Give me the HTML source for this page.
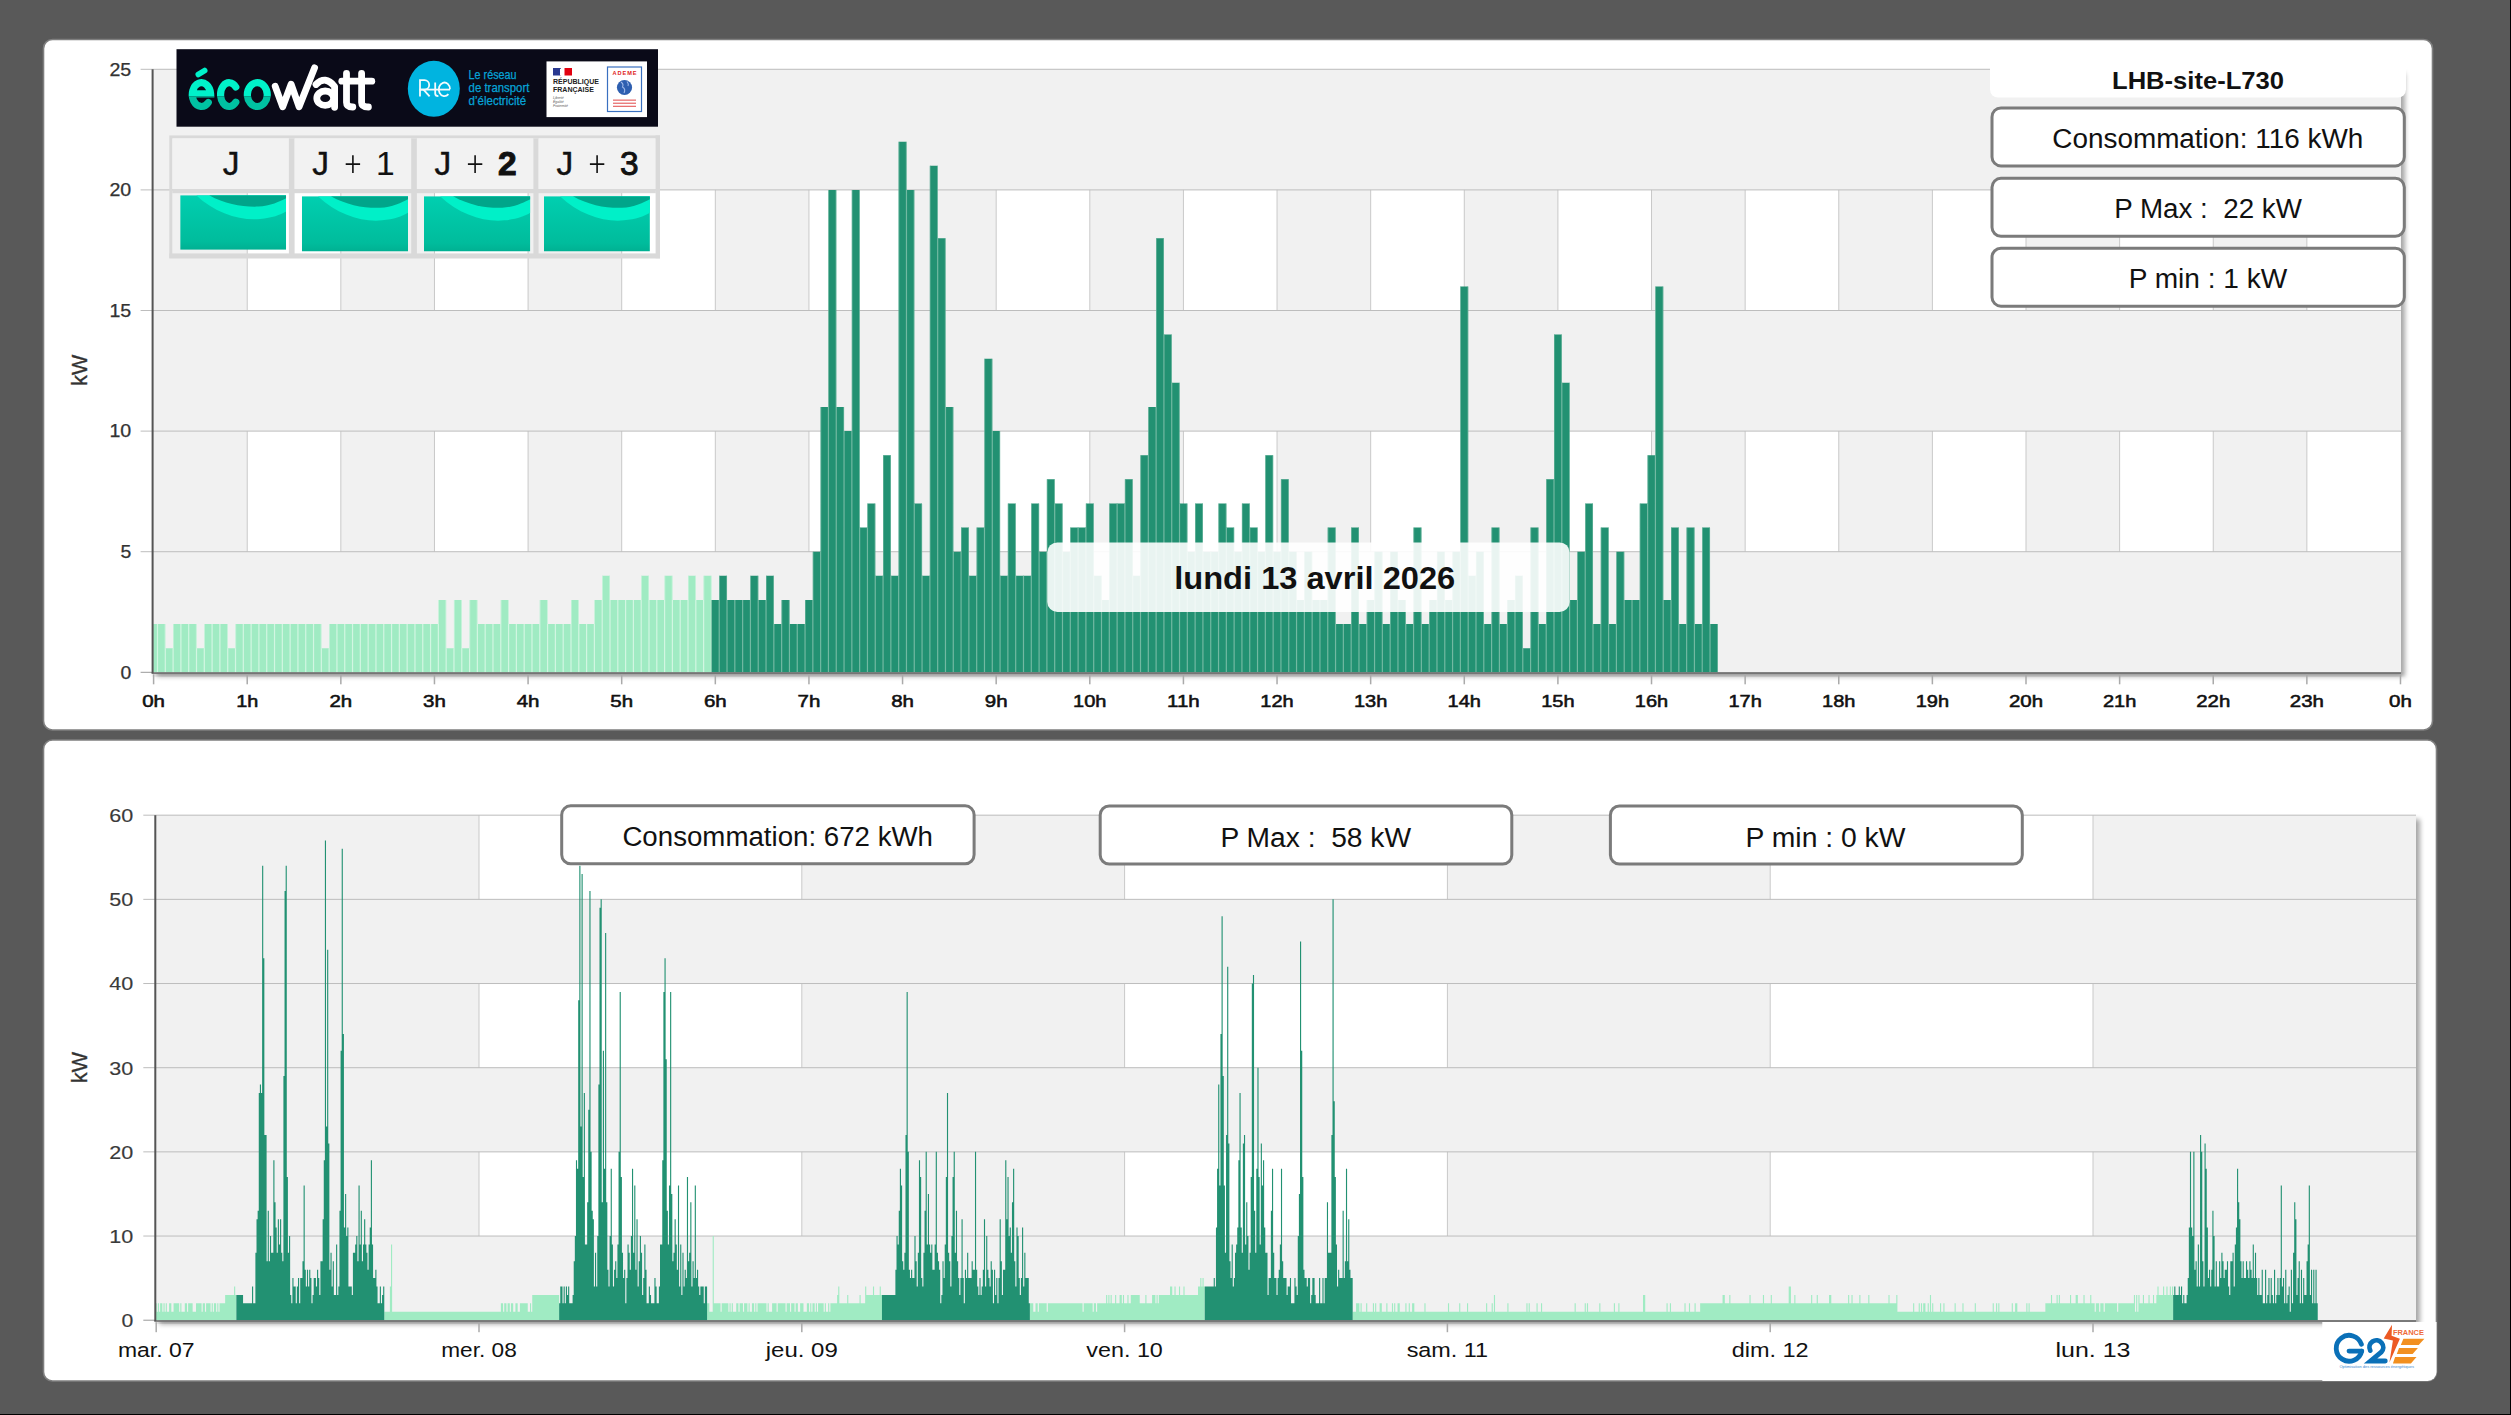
<!DOCTYPE html><html><head><meta charset="utf-8"><style>
html,body{margin:0;padding:0;background:#595959;overflow:hidden;}
svg{display:block;font-family:"Liberation Sans",sans-serif;}
</style></head><body>
<svg width="2511" height="1415" viewBox="0 0 2511 1415">
<defs><filter id="sh" x="-5%" y="-5%" width="110%" height="115%"><feGaussianBlur stdDeviation="2.5"/></filter><linearGradient id="tile" x1="0" y1="0" x2="0" y2="1"><stop offset="0" stop-color="#00cfb0"/><stop offset="0.85" stop-color="#00bc9c"/><stop offset="1" stop-color="#00b092"/></linearGradient></defs>
<rect x="0" y="0" width="2511" height="1415" fill="#595959"/>
<rect x="2510" y="0" width="1" height="1415" fill="#000"/>
<rect x="0" y="1414" width="2511" height="1" fill="#000"/>
<rect x="43.5" y="39.5" width="2389" height="690.5" rx="9" fill="#fff" stroke="#7f7f7f" stroke-width="1.6"/>
<rect x="43.5" y="740" width="2393" height="641" rx="9" fill="#fff" stroke="#7f7f7f" stroke-width="1.6"/>
<rect x="156.6" y="73.3" width="2248.4" height="603.0" fill="#000" opacity="0.35" filter="url(#sh)"/>
<rect x="152.6" y="69.3" width="2248.4" height="603.0" fill="#f1f1f1"/>
<rect x="247.22" y="431.10" width="93.62" height="120.60" fill="#fff"/>
<rect x="434.46" y="431.10" width="93.62" height="120.60" fill="#fff"/>
<rect x="621.70" y="431.10" width="93.62" height="120.60" fill="#fff"/>
<rect x="808.94" y="431.10" width="93.62" height="120.60" fill="#fff"/>
<rect x="996.18" y="431.10" width="93.62" height="120.60" fill="#fff"/>
<rect x="1183.42" y="431.10" width="93.62" height="120.60" fill="#fff"/>
<rect x="1370.66" y="431.10" width="93.62" height="120.60" fill="#fff"/>
<rect x="1557.90" y="431.10" width="93.62" height="120.60" fill="#fff"/>
<rect x="1745.14" y="431.10" width="93.62" height="120.60" fill="#fff"/>
<rect x="1932.38" y="431.10" width="93.62" height="120.60" fill="#fff"/>
<rect x="2119.62" y="431.10" width="93.62" height="120.60" fill="#fff"/>
<rect x="2306.86" y="431.10" width="93.62" height="120.60" fill="#fff"/>
<rect x="246.72" y="431.10" width="1" height="120.60" fill="#c9c9c9"/>
<rect x="340.34" y="431.10" width="1" height="120.60" fill="#c9c9c9"/>
<rect x="433.96" y="431.10" width="1" height="120.60" fill="#c9c9c9"/>
<rect x="527.58" y="431.10" width="1" height="120.60" fill="#c9c9c9"/>
<rect x="621.20" y="431.10" width="1" height="120.60" fill="#c9c9c9"/>
<rect x="714.82" y="431.10" width="1" height="120.60" fill="#c9c9c9"/>
<rect x="808.44" y="431.10" width="1" height="120.60" fill="#c9c9c9"/>
<rect x="902.06" y="431.10" width="1" height="120.60" fill="#c9c9c9"/>
<rect x="995.68" y="431.10" width="1" height="120.60" fill="#c9c9c9"/>
<rect x="1089.30" y="431.10" width="1" height="120.60" fill="#c9c9c9"/>
<rect x="1182.92" y="431.10" width="1" height="120.60" fill="#c9c9c9"/>
<rect x="1276.54" y="431.10" width="1" height="120.60" fill="#c9c9c9"/>
<rect x="1370.16" y="431.10" width="1" height="120.60" fill="#c9c9c9"/>
<rect x="1463.78" y="431.10" width="1" height="120.60" fill="#c9c9c9"/>
<rect x="1557.40" y="431.10" width="1" height="120.60" fill="#c9c9c9"/>
<rect x="1651.02" y="431.10" width="1" height="120.60" fill="#c9c9c9"/>
<rect x="1744.64" y="431.10" width="1" height="120.60" fill="#c9c9c9"/>
<rect x="1838.26" y="431.10" width="1" height="120.60" fill="#c9c9c9"/>
<rect x="1931.88" y="431.10" width="1" height="120.60" fill="#c9c9c9"/>
<rect x="2025.50" y="431.10" width="1" height="120.60" fill="#c9c9c9"/>
<rect x="2119.12" y="431.10" width="1" height="120.60" fill="#c9c9c9"/>
<rect x="2212.74" y="431.10" width="1" height="120.60" fill="#c9c9c9"/>
<rect x="2306.36" y="431.10" width="1" height="120.60" fill="#c9c9c9"/>
<rect x="247.22" y="189.90" width="93.62" height="120.60" fill="#fff"/>
<rect x="434.46" y="189.90" width="93.62" height="120.60" fill="#fff"/>
<rect x="621.70" y="189.90" width="93.62" height="120.60" fill="#fff"/>
<rect x="808.94" y="189.90" width="93.62" height="120.60" fill="#fff"/>
<rect x="996.18" y="189.90" width="93.62" height="120.60" fill="#fff"/>
<rect x="1183.42" y="189.90" width="93.62" height="120.60" fill="#fff"/>
<rect x="1370.66" y="189.90" width="93.62" height="120.60" fill="#fff"/>
<rect x="1557.90" y="189.90" width="93.62" height="120.60" fill="#fff"/>
<rect x="1745.14" y="189.90" width="93.62" height="120.60" fill="#fff"/>
<rect x="1932.38" y="189.90" width="93.62" height="120.60" fill="#fff"/>
<rect x="2119.62" y="189.90" width="93.62" height="120.60" fill="#fff"/>
<rect x="2306.86" y="189.90" width="93.62" height="120.60" fill="#fff"/>
<rect x="246.72" y="189.90" width="1" height="120.60" fill="#c9c9c9"/>
<rect x="340.34" y="189.90" width="1" height="120.60" fill="#c9c9c9"/>
<rect x="433.96" y="189.90" width="1" height="120.60" fill="#c9c9c9"/>
<rect x="527.58" y="189.90" width="1" height="120.60" fill="#c9c9c9"/>
<rect x="621.20" y="189.90" width="1" height="120.60" fill="#c9c9c9"/>
<rect x="714.82" y="189.90" width="1" height="120.60" fill="#c9c9c9"/>
<rect x="808.44" y="189.90" width="1" height="120.60" fill="#c9c9c9"/>
<rect x="902.06" y="189.90" width="1" height="120.60" fill="#c9c9c9"/>
<rect x="995.68" y="189.90" width="1" height="120.60" fill="#c9c9c9"/>
<rect x="1089.30" y="189.90" width="1" height="120.60" fill="#c9c9c9"/>
<rect x="1182.92" y="189.90" width="1" height="120.60" fill="#c9c9c9"/>
<rect x="1276.54" y="189.90" width="1" height="120.60" fill="#c9c9c9"/>
<rect x="1370.16" y="189.90" width="1" height="120.60" fill="#c9c9c9"/>
<rect x="1463.78" y="189.90" width="1" height="120.60" fill="#c9c9c9"/>
<rect x="1557.40" y="189.90" width="1" height="120.60" fill="#c9c9c9"/>
<rect x="1651.02" y="189.90" width="1" height="120.60" fill="#c9c9c9"/>
<rect x="1744.64" y="189.90" width="1" height="120.60" fill="#c9c9c9"/>
<rect x="1838.26" y="189.90" width="1" height="120.60" fill="#c9c9c9"/>
<rect x="1931.88" y="189.90" width="1" height="120.60" fill="#c9c9c9"/>
<rect x="2025.50" y="189.90" width="1" height="120.60" fill="#c9c9c9"/>
<rect x="2119.12" y="189.90" width="1" height="120.60" fill="#c9c9c9"/>
<rect x="2212.74" y="189.90" width="1" height="120.60" fill="#c9c9c9"/>
<rect x="2306.36" y="189.90" width="1" height="120.60" fill="#c9c9c9"/>
<rect x="140.6" y="551.20" width="2260.4" height="1" fill="#bdbdbd"/>
<rect x="140.6" y="430.60" width="2260.4" height="1" fill="#bdbdbd"/>
<rect x="140.6" y="310.00" width="2260.4" height="1" fill="#bdbdbd"/>
<rect x="140.6" y="189.40" width="2260.4" height="1" fill="#bdbdbd"/>
<rect x="140.6" y="68.80" width="2260.4" height="1" fill="#bdbdbd"/>
<rect x="140.6" y="671.80" width="12" height="1" fill="#999"/>
<path d="M153.10 672.30V624.06H157.50V672.30ZM157.50 672.30V624.06H165.30V672.30ZM165.30 672.30V648.18H173.10V672.30ZM173.10 672.30V624.06H180.91V672.30ZM180.91 672.30V624.06H188.71V672.30ZM188.71 672.30V624.06H196.51V672.30ZM196.51 672.30V648.18H204.31V672.30ZM204.31 672.30V624.06H212.11V672.30ZM212.11 672.30V624.06H219.91V672.30ZM219.91 672.30V624.06H227.72V672.30ZM227.72 672.30V648.18H235.52V672.30ZM235.52 672.30V624.06H243.32V672.30ZM243.32 672.30V624.06H251.12V672.30ZM251.12 672.30V624.06H258.92V672.30ZM258.92 672.30V624.06H266.72V672.30ZM266.72 672.30V624.06H274.53V672.30ZM274.53 672.30V624.06H282.33V672.30ZM282.33 672.30V624.06H290.13V672.30ZM290.13 672.30V624.06H297.93V672.30ZM297.93 672.30V624.06H305.73V672.30ZM305.73 672.30V624.06H313.53V672.30ZM313.53 672.30V624.06H321.34V672.30ZM321.34 672.30V648.18H329.14V672.30ZM329.14 672.30V624.06H336.94V672.30ZM336.94 672.30V624.06H344.74V672.30ZM344.74 672.30V624.06H352.54V672.30ZM352.54 672.30V624.06H360.34V672.30ZM360.34 672.30V624.06H368.15V672.30ZM368.15 672.30V624.06H375.95V672.30ZM375.95 672.30V624.06H383.75V672.30ZM383.75 672.30V624.06H391.55V672.30ZM391.55 672.30V624.06H399.35V672.30ZM399.35 672.30V624.06H407.15V672.30ZM407.15 672.30V624.06H414.96V672.30ZM414.96 672.30V624.06H422.76V672.30ZM422.76 672.30V624.06H430.56V672.30ZM430.56 672.30V624.06H438.36V672.30ZM438.36 672.30V599.94H446.16V672.30ZM446.16 672.30V648.18H453.96V672.30ZM453.96 672.30V599.94H461.77V672.30ZM461.77 672.30V648.18H469.57V672.30ZM469.57 672.30V599.94H477.37V672.30ZM477.37 672.30V624.06H485.17V672.30ZM485.17 672.30V624.06H492.97V672.30ZM492.97 672.30V624.06H500.77V672.30ZM500.77 672.30V599.94H508.58V672.30ZM508.58 672.30V624.06H516.38V672.30ZM516.38 672.30V624.06H524.18V672.30ZM524.18 672.30V624.06H531.98V672.30ZM531.98 672.30V624.06H539.78V672.30ZM539.78 672.30V599.94H547.58V672.30ZM547.58 672.30V624.06H555.39V672.30ZM555.39 672.30V624.06H563.19V672.30ZM563.19 672.30V624.06H570.99V672.30ZM570.99 672.30V599.94H578.79V672.30ZM578.79 672.30V624.06H586.59V672.30ZM586.59 672.30V624.06H594.39V672.30ZM594.39 672.30V599.94H602.20V672.30ZM602.20 672.30V575.82H610.00V672.30ZM610.00 672.30V599.94H617.80V672.30ZM617.80 672.30V599.94H625.60V672.30ZM625.60 672.30V599.94H633.40V672.30ZM633.40 672.30V599.94H641.20V672.30ZM641.20 672.30V575.82H649.01V672.30ZM649.01 672.30V599.94H656.81V672.30ZM656.81 672.30V599.94H664.61V672.30ZM664.61 672.30V575.82H672.41V672.30ZM672.41 672.30V599.94H680.21V672.30ZM680.21 672.30V599.94H688.01V672.30ZM688.01 672.30V575.82H695.82V672.30ZM695.82 672.30V599.94H703.62V672.30ZM703.62 672.30V575.82H711.42V672.30Z" fill="#a0ebc3"/>
<path d="M711.42 672.30V599.94H719.22V672.30ZM719.22 672.30V575.82H727.02V672.30ZM727.02 672.30V599.94H734.82V672.30ZM734.82 672.30V599.94H742.63V672.30ZM742.63 672.30V599.94H750.43V672.30ZM750.43 672.30V575.82H758.23V672.30ZM758.23 672.30V599.94H766.03V672.30ZM766.03 672.30V575.82H773.83V672.30ZM773.83 672.30V624.06H781.63V672.30ZM781.63 672.30V599.94H789.44V672.30ZM789.44 672.30V624.06H797.24V672.30ZM797.24 672.30V624.06H805.04V672.30ZM805.04 672.30V599.94H812.84V672.30ZM812.84 672.30V551.70H820.64V672.30ZM820.64 672.30V406.98H828.44V672.30ZM828.44 672.30V189.90H836.25V672.30ZM836.25 672.30V406.98H844.05V672.30ZM844.05 672.30V431.10H851.85V672.30ZM851.85 672.30V189.90H859.65V672.30ZM859.65 672.30V527.58H867.45V672.30ZM867.45 672.30V503.46H875.25V672.30ZM875.25 672.30V575.82H883.06V672.30ZM883.06 672.30V455.22H890.86V672.30ZM890.86 672.30V575.82H898.66V672.30ZM898.66 672.30V141.66H906.46V672.30ZM906.46 672.30V189.90H914.26V672.30ZM914.26 672.30V503.46H922.06V672.30ZM922.06 672.30V575.82H929.87V672.30ZM929.87 672.30V165.78H937.67V672.30ZM937.67 672.30V238.14H945.47V672.30ZM945.47 672.30V406.98H953.27V672.30ZM953.27 672.30V551.70H961.07V672.30ZM961.07 672.30V527.58H968.87V672.30ZM968.87 672.30V575.82H976.68V672.30ZM976.68 672.30V527.58H984.48V672.30ZM984.48 672.30V358.74H992.28V672.30ZM992.28 672.30V431.10H1000.08V672.30ZM1000.08 672.30V575.82H1007.88V672.30ZM1007.88 672.30V503.46H1015.68V672.30ZM1015.68 672.30V575.82H1023.49V672.30ZM1023.49 672.30V575.82H1031.29V672.30ZM1031.29 672.30V503.46H1039.09V672.30ZM1039.09 672.30V551.70H1046.89V672.30ZM1046.89 672.30V479.34H1054.69V672.30ZM1054.69 672.30V503.46H1062.49V672.30ZM1062.49 672.30V551.70H1070.30V672.30ZM1070.30 672.30V527.58H1078.10V672.30ZM1078.10 672.30V527.58H1085.90V672.30ZM1085.90 672.30V503.46H1093.70V672.30ZM1093.70 672.30V575.82H1101.50V672.30ZM1101.50 672.30V599.94H1109.30V672.30ZM1109.30 672.30V503.46H1117.11V672.30ZM1117.11 672.30V503.46H1124.91V672.30ZM1124.91 672.30V479.34H1132.71V672.30ZM1132.71 672.30V575.82H1140.51V672.30ZM1140.51 672.30V455.22H1148.31V672.30ZM1148.31 672.30V406.98H1156.11V672.30ZM1156.11 672.30V238.14H1163.92V672.30ZM1163.92 672.30V334.62H1171.72V672.30ZM1171.72 672.30V382.86H1179.52V672.30ZM1179.52 672.30V503.46H1187.32V672.30ZM1187.32 672.30V551.70H1195.12V672.30ZM1195.12 672.30V503.46H1202.92V672.30ZM1202.92 672.30V551.70H1210.73V672.30ZM1210.73 672.30V551.70H1218.53V672.30ZM1218.53 672.30V503.46H1226.33V672.30ZM1226.33 672.30V527.58H1234.13V672.30ZM1234.13 672.30V551.70H1241.93V672.30ZM1241.93 672.30V503.46H1249.73V672.30ZM1249.73 672.30V527.58H1257.54V672.30ZM1257.54 672.30V551.70H1265.34V672.30ZM1265.34 672.30V455.22H1273.14V672.30ZM1273.14 672.30V551.70H1280.94V672.30ZM1280.94 672.30V479.34H1288.74V672.30ZM1288.74 672.30V551.70H1296.54V672.30ZM1296.54 672.30V599.94H1304.35V672.30ZM1304.35 672.30V551.70H1312.15V672.30ZM1312.15 672.30V599.94H1319.95V672.30ZM1319.95 672.30V599.94H1327.75V672.30ZM1327.75 672.30V527.58H1335.55V672.30ZM1335.55 672.30V624.06H1343.35V672.30ZM1343.35 672.30V624.06H1351.16V672.30ZM1351.16 672.30V527.58H1358.96V672.30ZM1358.96 672.30V624.06H1366.76V672.30ZM1366.76 672.30V599.94H1374.56V672.30ZM1374.56 672.30V551.70H1382.36V672.30ZM1382.36 672.30V624.06H1390.16V672.30ZM1390.16 672.30V551.70H1397.97V672.30ZM1397.97 672.30V599.94H1405.77V672.30ZM1405.77 672.30V624.06H1413.57V672.30ZM1413.57 672.30V527.58H1421.37V672.30ZM1421.37 672.30V624.06H1429.17V672.30ZM1429.17 672.30V599.94H1436.97V672.30ZM1436.97 672.30V551.70H1444.78V672.30ZM1444.78 672.30V599.94H1452.58V672.30ZM1452.58 672.30V551.70H1460.38V672.30ZM1460.38 672.30V286.38H1468.18V672.30ZM1468.18 672.30V575.82H1475.98V672.30ZM1475.98 672.30V551.70H1483.78V672.30ZM1483.78 672.30V624.06H1491.59V672.30ZM1491.59 672.30V527.58H1499.39V672.30ZM1499.39 672.30V624.06H1507.19V672.30ZM1507.19 672.30V599.94H1514.99V672.30ZM1514.99 672.30V575.82H1522.79V672.30ZM1522.79 672.30V648.18H1530.59V672.30ZM1530.59 672.30V527.58H1538.40V672.30ZM1538.40 672.30V624.06H1546.20V672.30ZM1546.20 672.30V479.34H1554.00V672.30ZM1554.00 672.30V334.62H1561.80V672.30ZM1561.80 672.30V382.86H1569.60V672.30ZM1569.60 672.30V599.94H1577.40V672.30ZM1577.40 672.30V551.70H1585.21V672.30ZM1585.21 672.30V503.46H1593.01V672.30ZM1593.01 672.30V624.06H1600.81V672.30ZM1600.81 672.30V527.58H1608.61V672.30ZM1608.61 672.30V624.06H1616.41V672.30ZM1616.41 672.30V551.70H1624.21V672.30ZM1624.21 672.30V599.94H1632.02V672.30ZM1632.02 672.30V599.94H1639.82V672.30ZM1639.82 672.30V503.46H1647.62V672.30ZM1647.62 672.30V455.22H1655.42V672.30ZM1655.42 672.30V286.38H1663.22V672.30ZM1663.22 672.30V599.94H1671.02V672.30ZM1671.02 672.30V527.58H1678.83V672.30ZM1678.83 672.30V624.06H1686.63V672.30ZM1686.63 672.30V527.58H1694.43V672.30ZM1694.43 672.30V624.06H1702.23V672.30ZM1702.23 672.30V527.58H1710.03V672.30ZM1710.03 672.30V624.06H1717.83V672.30Z" fill="#229172"/>
<path d="M156.90 672.30V624.06h0.6V672.30ZM157.50 672.30V624.06h0.6V672.30ZM164.70 672.30V624.06h0.6V672.30ZM165.30 672.30V648.18h0.6V672.30ZM172.50 672.30V648.18h0.6V672.30ZM173.10 672.30V624.06h0.6V672.30ZM180.31 672.30V624.06h0.6V672.30ZM180.91 672.30V624.06h0.6V672.30ZM188.11 672.30V624.06h0.6V672.30ZM188.71 672.30V624.06h0.6V672.30ZM195.91 672.30V624.06h0.6V672.30ZM196.51 672.30V648.18h0.6V672.30ZM203.71 672.30V648.18h0.6V672.30ZM204.31 672.30V624.06h0.6V672.30ZM211.51 672.30V624.06h0.6V672.30ZM212.11 672.30V624.06h0.6V672.30ZM219.31 672.30V624.06h0.6V672.30ZM219.91 672.30V624.06h0.6V672.30ZM227.12 672.30V624.06h0.6V672.30ZM227.72 672.30V648.18h0.6V672.30ZM234.92 672.30V648.18h0.6V672.30ZM235.52 672.30V624.06h0.6V672.30ZM242.72 672.30V624.06h0.6V672.30ZM243.32 672.30V624.06h0.6V672.30ZM250.52 672.30V624.06h0.6V672.30ZM251.12 672.30V624.06h0.6V672.30ZM258.32 672.30V624.06h0.6V672.30ZM258.92 672.30V624.06h0.6V672.30ZM266.12 672.30V624.06h0.6V672.30ZM266.72 672.30V624.06h0.6V672.30ZM273.93 672.30V624.06h0.6V672.30ZM274.53 672.30V624.06h0.6V672.30ZM281.73 672.30V624.06h0.6V672.30ZM282.33 672.30V624.06h0.6V672.30ZM289.53 672.30V624.06h0.6V672.30ZM290.13 672.30V624.06h0.6V672.30ZM297.33 672.30V624.06h0.6V672.30ZM297.93 672.30V624.06h0.6V672.30ZM305.13 672.30V624.06h0.6V672.30ZM305.73 672.30V624.06h0.6V672.30ZM312.93 672.30V624.06h0.6V672.30ZM313.53 672.30V624.06h0.6V672.30ZM320.74 672.30V624.06h0.6V672.30ZM321.34 672.30V648.18h0.6V672.30ZM328.54 672.30V648.18h0.6V672.30ZM329.14 672.30V624.06h0.6V672.30ZM336.34 672.30V624.06h0.6V672.30ZM336.94 672.30V624.06h0.6V672.30ZM344.14 672.30V624.06h0.6V672.30ZM344.74 672.30V624.06h0.6V672.30ZM351.94 672.30V624.06h0.6V672.30ZM352.54 672.30V624.06h0.6V672.30ZM359.74 672.30V624.06h0.6V672.30ZM360.34 672.30V624.06h0.6V672.30ZM367.55 672.30V624.06h0.6V672.30ZM368.15 672.30V624.06h0.6V672.30ZM375.35 672.30V624.06h0.6V672.30ZM375.95 672.30V624.06h0.6V672.30ZM383.15 672.30V624.06h0.6V672.30ZM383.75 672.30V624.06h0.6V672.30ZM390.95 672.30V624.06h0.6V672.30ZM391.55 672.30V624.06h0.6V672.30ZM398.75 672.30V624.06h0.6V672.30ZM399.35 672.30V624.06h0.6V672.30ZM406.55 672.30V624.06h0.6V672.30ZM407.15 672.30V624.06h0.6V672.30ZM414.36 672.30V624.06h0.6V672.30ZM414.96 672.30V624.06h0.6V672.30ZM422.16 672.30V624.06h0.6V672.30ZM422.76 672.30V624.06h0.6V672.30ZM429.96 672.30V624.06h0.6V672.30ZM430.56 672.30V624.06h0.6V672.30ZM437.76 672.30V624.06h0.6V672.30ZM438.36 672.30V599.94h0.6V672.30ZM445.56 672.30V599.94h0.6V672.30ZM446.16 672.30V648.18h0.6V672.30ZM453.36 672.30V648.18h0.6V672.30ZM453.96 672.30V599.94h0.6V672.30ZM461.17 672.30V599.94h0.6V672.30ZM461.77 672.30V648.18h0.6V672.30ZM468.97 672.30V648.18h0.6V672.30ZM469.57 672.30V599.94h0.6V672.30ZM476.77 672.30V599.94h0.6V672.30ZM477.37 672.30V624.06h0.6V672.30ZM484.57 672.30V624.06h0.6V672.30ZM485.17 672.30V624.06h0.6V672.30ZM492.37 672.30V624.06h0.6V672.30ZM492.97 672.30V624.06h0.6V672.30ZM500.17 672.30V624.06h0.6V672.30ZM500.77 672.30V599.94h0.6V672.30ZM507.98 672.30V599.94h0.6V672.30ZM508.58 672.30V624.06h0.6V672.30ZM515.78 672.30V624.06h0.6V672.30ZM516.38 672.30V624.06h0.6V672.30ZM523.58 672.30V624.06h0.6V672.30ZM524.18 672.30V624.06h0.6V672.30ZM531.38 672.30V624.06h0.6V672.30ZM531.98 672.30V624.06h0.6V672.30ZM539.18 672.30V624.06h0.6V672.30ZM539.78 672.30V599.94h0.6V672.30ZM546.98 672.30V599.94h0.6V672.30ZM547.58 672.30V624.06h0.6V672.30ZM554.79 672.30V624.06h0.6V672.30ZM555.39 672.30V624.06h0.6V672.30ZM562.59 672.30V624.06h0.6V672.30ZM563.19 672.30V624.06h0.6V672.30ZM570.39 672.30V624.06h0.6V672.30ZM570.99 672.30V599.94h0.6V672.30ZM578.19 672.30V599.94h0.6V672.30ZM578.79 672.30V624.06h0.6V672.30ZM585.99 672.30V624.06h0.6V672.30ZM586.59 672.30V624.06h0.6V672.30ZM593.79 672.30V624.06h0.6V672.30ZM594.39 672.30V599.94h0.6V672.30ZM601.60 672.30V599.94h0.6V672.30ZM602.20 672.30V575.82h0.6V672.30ZM609.40 672.30V575.82h0.6V672.30ZM610.00 672.30V599.94h0.6V672.30ZM617.20 672.30V599.94h0.6V672.30ZM617.80 672.30V599.94h0.6V672.30ZM625.00 672.30V599.94h0.6V672.30ZM625.60 672.30V599.94h0.6V672.30ZM632.80 672.30V599.94h0.6V672.30ZM633.40 672.30V599.94h0.6V672.30ZM640.60 672.30V599.94h0.6V672.30ZM641.20 672.30V575.82h0.6V672.30ZM648.41 672.30V575.82h0.6V672.30ZM649.01 672.30V599.94h0.6V672.30ZM656.21 672.30V599.94h0.6V672.30ZM656.81 672.30V599.94h0.6V672.30ZM664.01 672.30V599.94h0.6V672.30ZM664.61 672.30V575.82h0.6V672.30ZM671.81 672.30V575.82h0.6V672.30ZM672.41 672.30V599.94h0.6V672.30ZM679.61 672.30V599.94h0.6V672.30ZM680.21 672.30V599.94h0.6V672.30ZM687.41 672.30V599.94h0.6V672.30ZM688.01 672.30V575.82h0.6V672.30ZM695.22 672.30V575.82h0.6V672.30ZM695.82 672.30V599.94h0.6V672.30ZM703.02 672.30V599.94h0.6V672.30ZM703.62 672.30V575.82h0.6V672.30ZM710.82 672.30V575.82h0.6V672.30Z" fill="#d2f6e2"/>
<path d="M711.42 672.30V599.94h0.6V672.30ZM718.62 672.30V599.94h0.6V672.30ZM719.22 672.30V575.82h0.6V672.30ZM726.42 672.30V575.82h0.6V672.30ZM727.02 672.30V599.94h0.6V672.30ZM734.22 672.30V599.94h0.6V672.30ZM734.82 672.30V599.94h0.6V672.30ZM742.03 672.30V599.94h0.6V672.30ZM742.63 672.30V599.94h0.6V672.30ZM749.83 672.30V599.94h0.6V672.30ZM750.43 672.30V575.82h0.6V672.30ZM757.63 672.30V575.82h0.6V672.30ZM758.23 672.30V599.94h0.6V672.30ZM765.43 672.30V599.94h0.6V672.30ZM766.03 672.30V575.82h0.6V672.30ZM773.23 672.30V575.82h0.6V672.30ZM773.83 672.30V624.06h0.6V672.30ZM781.03 672.30V624.06h0.6V672.30ZM781.63 672.30V599.94h0.6V672.30ZM788.84 672.30V599.94h0.6V672.30ZM789.44 672.30V624.06h0.6V672.30ZM796.64 672.30V624.06h0.6V672.30ZM797.24 672.30V624.06h0.6V672.30ZM804.44 672.30V624.06h0.6V672.30ZM805.04 672.30V599.94h0.6V672.30ZM812.24 672.30V599.94h0.6V672.30ZM812.84 672.30V551.70h0.6V672.30ZM820.04 672.30V551.70h0.6V672.30ZM820.64 672.30V406.98h0.6V672.30ZM827.84 672.30V406.98h0.6V672.30ZM828.44 672.30V189.90h0.6V672.30ZM835.65 672.30V189.90h0.6V672.30ZM836.25 672.30V406.98h0.6V672.30ZM843.45 672.30V406.98h0.6V672.30ZM844.05 672.30V431.10h0.6V672.30ZM851.25 672.30V431.10h0.6V672.30ZM851.85 672.30V189.90h0.6V672.30ZM859.05 672.30V189.90h0.6V672.30ZM859.65 672.30V527.58h0.6V672.30ZM866.85 672.30V527.58h0.6V672.30ZM867.45 672.30V503.46h0.6V672.30ZM874.65 672.30V503.46h0.6V672.30ZM875.25 672.30V575.82h0.6V672.30ZM882.46 672.30V575.82h0.6V672.30ZM883.06 672.30V455.22h0.6V672.30ZM890.26 672.30V455.22h0.6V672.30ZM890.86 672.30V575.82h0.6V672.30ZM898.06 672.30V575.82h0.6V672.30ZM898.66 672.30V141.66h0.6V672.30ZM905.86 672.30V141.66h0.6V672.30ZM906.46 672.30V189.90h0.6V672.30ZM913.66 672.30V189.90h0.6V672.30ZM914.26 672.30V503.46h0.6V672.30ZM921.46 672.30V503.46h0.6V672.30ZM922.06 672.30V575.82h0.6V672.30ZM929.27 672.30V575.82h0.6V672.30ZM929.87 672.30V165.78h0.6V672.30ZM937.07 672.30V165.78h0.6V672.30ZM937.67 672.30V238.14h0.6V672.30ZM944.87 672.30V238.14h0.6V672.30ZM945.47 672.30V406.98h0.6V672.30ZM952.67 672.30V406.98h0.6V672.30ZM953.27 672.30V551.70h0.6V672.30ZM960.47 672.30V551.70h0.6V672.30ZM961.07 672.30V527.58h0.6V672.30ZM968.27 672.30V527.58h0.6V672.30ZM968.87 672.30V575.82h0.6V672.30ZM976.08 672.30V575.82h0.6V672.30ZM976.68 672.30V527.58h0.6V672.30ZM983.88 672.30V527.58h0.6V672.30ZM984.48 672.30V358.74h0.6V672.30ZM991.68 672.30V358.74h0.6V672.30ZM992.28 672.30V431.10h0.6V672.30ZM999.48 672.30V431.10h0.6V672.30ZM1000.08 672.30V575.82h0.6V672.30ZM1007.28 672.30V575.82h0.6V672.30ZM1007.88 672.30V503.46h0.6V672.30ZM1015.08 672.30V503.46h0.6V672.30ZM1015.68 672.30V575.82h0.6V672.30ZM1022.89 672.30V575.82h0.6V672.30ZM1023.49 672.30V575.82h0.6V672.30ZM1030.69 672.30V575.82h0.6V672.30ZM1031.29 672.30V503.46h0.6V672.30ZM1038.49 672.30V503.46h0.6V672.30ZM1039.09 672.30V551.70h0.6V672.30ZM1046.29 672.30V551.70h0.6V672.30ZM1046.89 672.30V479.34h0.6V672.30ZM1054.09 672.30V479.34h0.6V672.30ZM1054.69 672.30V503.46h0.6V672.30ZM1061.89 672.30V503.46h0.6V672.30ZM1062.49 672.30V551.70h0.6V672.30ZM1069.70 672.30V551.70h0.6V672.30ZM1070.30 672.30V527.58h0.6V672.30ZM1077.50 672.30V527.58h0.6V672.30ZM1078.10 672.30V527.58h0.6V672.30ZM1085.30 672.30V527.58h0.6V672.30ZM1085.90 672.30V503.46h0.6V672.30ZM1093.10 672.30V503.46h0.6V672.30ZM1093.70 672.30V575.82h0.6V672.30ZM1100.90 672.30V575.82h0.6V672.30ZM1101.50 672.30V599.94h0.6V672.30ZM1108.70 672.30V599.94h0.6V672.30ZM1109.30 672.30V503.46h0.6V672.30ZM1116.51 672.30V503.46h0.6V672.30ZM1117.11 672.30V503.46h0.6V672.30ZM1124.31 672.30V503.46h0.6V672.30ZM1124.91 672.30V479.34h0.6V672.30ZM1132.11 672.30V479.34h0.6V672.30ZM1132.71 672.30V575.82h0.6V672.30ZM1139.91 672.30V575.82h0.6V672.30ZM1140.51 672.30V455.22h0.6V672.30ZM1147.71 672.30V455.22h0.6V672.30ZM1148.31 672.30V406.98h0.6V672.30ZM1155.51 672.30V406.98h0.6V672.30ZM1156.11 672.30V238.14h0.6V672.30ZM1163.32 672.30V238.14h0.6V672.30ZM1163.92 672.30V334.62h0.6V672.30ZM1171.12 672.30V334.62h0.6V672.30ZM1171.72 672.30V382.86h0.6V672.30ZM1178.92 672.30V382.86h0.6V672.30ZM1179.52 672.30V503.46h0.6V672.30ZM1186.72 672.30V503.46h0.6V672.30ZM1187.32 672.30V551.70h0.6V672.30ZM1194.52 672.30V551.70h0.6V672.30ZM1195.12 672.30V503.46h0.6V672.30ZM1202.32 672.30V503.46h0.6V672.30ZM1202.92 672.30V551.70h0.6V672.30ZM1210.13 672.30V551.70h0.6V672.30ZM1210.73 672.30V551.70h0.6V672.30ZM1217.93 672.30V551.70h0.6V672.30ZM1218.53 672.30V503.46h0.6V672.30ZM1225.73 672.30V503.46h0.6V672.30ZM1226.33 672.30V527.58h0.6V672.30ZM1233.53 672.30V527.58h0.6V672.30ZM1234.13 672.30V551.70h0.6V672.30ZM1241.33 672.30V551.70h0.6V672.30ZM1241.93 672.30V503.46h0.6V672.30ZM1249.13 672.30V503.46h0.6V672.30ZM1249.73 672.30V527.58h0.6V672.30ZM1256.94 672.30V527.58h0.6V672.30ZM1257.54 672.30V551.70h0.6V672.30ZM1264.74 672.30V551.70h0.6V672.30ZM1265.34 672.30V455.22h0.6V672.30ZM1272.54 672.30V455.22h0.6V672.30ZM1273.14 672.30V551.70h0.6V672.30ZM1280.34 672.30V551.70h0.6V672.30ZM1280.94 672.30V479.34h0.6V672.30ZM1288.14 672.30V479.34h0.6V672.30ZM1288.74 672.30V551.70h0.6V672.30ZM1295.94 672.30V551.70h0.6V672.30ZM1296.54 672.30V599.94h0.6V672.30ZM1303.75 672.30V599.94h0.6V672.30ZM1304.35 672.30V551.70h0.6V672.30ZM1311.55 672.30V551.70h0.6V672.30ZM1312.15 672.30V599.94h0.6V672.30ZM1319.35 672.30V599.94h0.6V672.30ZM1319.95 672.30V599.94h0.6V672.30ZM1327.15 672.30V599.94h0.6V672.30ZM1327.75 672.30V527.58h0.6V672.30ZM1334.95 672.30V527.58h0.6V672.30ZM1335.55 672.30V624.06h0.6V672.30ZM1342.75 672.30V624.06h0.6V672.30ZM1343.35 672.30V624.06h0.6V672.30ZM1350.56 672.30V624.06h0.6V672.30ZM1351.16 672.30V527.58h0.6V672.30ZM1358.36 672.30V527.58h0.6V672.30ZM1358.96 672.30V624.06h0.6V672.30ZM1366.16 672.30V624.06h0.6V672.30ZM1366.76 672.30V599.94h0.6V672.30ZM1373.96 672.30V599.94h0.6V672.30ZM1374.56 672.30V551.70h0.6V672.30ZM1381.76 672.30V551.70h0.6V672.30ZM1382.36 672.30V624.06h0.6V672.30ZM1389.56 672.30V624.06h0.6V672.30ZM1390.16 672.30V551.70h0.6V672.30ZM1397.37 672.30V551.70h0.6V672.30ZM1397.97 672.30V599.94h0.6V672.30ZM1405.17 672.30V599.94h0.6V672.30ZM1405.77 672.30V624.06h0.6V672.30ZM1412.97 672.30V624.06h0.6V672.30ZM1413.57 672.30V527.58h0.6V672.30ZM1420.77 672.30V527.58h0.6V672.30ZM1421.37 672.30V624.06h0.6V672.30ZM1428.57 672.30V624.06h0.6V672.30ZM1429.17 672.30V599.94h0.6V672.30ZM1436.37 672.30V599.94h0.6V672.30ZM1436.97 672.30V551.70h0.6V672.30ZM1444.18 672.30V551.70h0.6V672.30ZM1444.78 672.30V599.94h0.6V672.30ZM1451.98 672.30V599.94h0.6V672.30ZM1452.58 672.30V551.70h0.6V672.30ZM1459.78 672.30V551.70h0.6V672.30ZM1460.38 672.30V286.38h0.6V672.30ZM1467.58 672.30V286.38h0.6V672.30ZM1468.18 672.30V575.82h0.6V672.30ZM1475.38 672.30V575.82h0.6V672.30ZM1475.98 672.30V551.70h0.6V672.30ZM1483.18 672.30V551.70h0.6V672.30ZM1483.78 672.30V624.06h0.6V672.30ZM1490.99 672.30V624.06h0.6V672.30ZM1491.59 672.30V527.58h0.6V672.30ZM1498.79 672.30V527.58h0.6V672.30ZM1499.39 672.30V624.06h0.6V672.30ZM1506.59 672.30V624.06h0.6V672.30ZM1507.19 672.30V599.94h0.6V672.30ZM1514.39 672.30V599.94h0.6V672.30ZM1514.99 672.30V575.82h0.6V672.30ZM1522.19 672.30V575.82h0.6V672.30ZM1522.79 672.30V648.18h0.6V672.30ZM1529.99 672.30V648.18h0.6V672.30ZM1530.59 672.30V527.58h0.6V672.30ZM1537.80 672.30V527.58h0.6V672.30ZM1538.40 672.30V624.06h0.6V672.30ZM1545.60 672.30V624.06h0.6V672.30ZM1546.20 672.30V479.34h0.6V672.30ZM1553.40 672.30V479.34h0.6V672.30ZM1554.00 672.30V334.62h0.6V672.30ZM1561.20 672.30V334.62h0.6V672.30ZM1561.80 672.30V382.86h0.6V672.30ZM1569.00 672.30V382.86h0.6V672.30ZM1569.60 672.30V599.94h0.6V672.30ZM1576.80 672.30V599.94h0.6V672.30ZM1577.40 672.30V551.70h0.6V672.30ZM1584.61 672.30V551.70h0.6V672.30ZM1585.21 672.30V503.46h0.6V672.30ZM1592.41 672.30V503.46h0.6V672.30ZM1593.01 672.30V624.06h0.6V672.30ZM1600.21 672.30V624.06h0.6V672.30ZM1600.81 672.30V527.58h0.6V672.30ZM1608.01 672.30V527.58h0.6V672.30ZM1608.61 672.30V624.06h0.6V672.30ZM1615.81 672.30V624.06h0.6V672.30ZM1616.41 672.30V551.70h0.6V672.30ZM1623.61 672.30V551.70h0.6V672.30ZM1624.21 672.30V599.94h0.6V672.30ZM1631.42 672.30V599.94h0.6V672.30ZM1632.02 672.30V599.94h0.6V672.30ZM1639.22 672.30V599.94h0.6V672.30ZM1639.82 672.30V503.46h0.6V672.30ZM1647.02 672.30V503.46h0.6V672.30ZM1647.62 672.30V455.22h0.6V672.30ZM1654.82 672.30V455.22h0.6V672.30ZM1655.42 672.30V286.38h0.6V672.30ZM1662.62 672.30V286.38h0.6V672.30ZM1663.22 672.30V599.94h0.6V672.30ZM1670.42 672.30V599.94h0.6V672.30ZM1671.02 672.30V527.58h0.6V672.30ZM1678.23 672.30V527.58h0.6V672.30ZM1678.83 672.30V624.06h0.6V672.30ZM1686.03 672.30V624.06h0.6V672.30ZM1686.63 672.30V527.58h0.6V672.30ZM1693.83 672.30V527.58h0.6V672.30ZM1694.43 672.30V624.06h0.6V672.30ZM1701.63 672.30V624.06h0.6V672.30ZM1702.23 672.30V527.58h0.6V672.30ZM1709.43 672.30V527.58h0.6V672.30ZM1710.03 672.30V624.06h0.6V672.30ZM1717.23 672.30V624.06h0.6V672.30Z" fill="#72b9a2"/>
<rect x="153.6" y="672.80" width="2248.4" height="3" fill="#000" opacity="0.25" filter="url(#sh)"/>
<rect x="151.6" y="672.30" width="2249.4" height="1.6" fill="#707070"/>
<rect x="151.6" y="69.30" width="2" height="604.00" fill="#555"/>
<rect x="152.85" y="674.30" width="1.5" height="10" fill="#aaa"/>
<text x="142.20" y="706.5" font-size="17" fill="#111" stroke="#111" stroke-width="0.55" textLength="22.8" lengthAdjust="spacingAndGlyphs">0h</text>
<rect x="246.47" y="674.30" width="1.5" height="10" fill="#aaa"/>
<text x="236.17" y="706.5" font-size="17" fill="#111" stroke="#111" stroke-width="0.55" textLength="22.1" lengthAdjust="spacingAndGlyphs">1h</text>
<rect x="340.09" y="674.30" width="1.5" height="10" fill="#aaa"/>
<text x="329.44" y="706.5" font-size="17" fill="#111" stroke="#111" stroke-width="0.55" textLength="22.8" lengthAdjust="spacingAndGlyphs">2h</text>
<rect x="433.71" y="674.30" width="1.5" height="10" fill="#aaa"/>
<text x="423.06" y="706.5" font-size="17" fill="#111" stroke="#111" stroke-width="0.55" textLength="22.8" lengthAdjust="spacingAndGlyphs">3h</text>
<rect x="527.33" y="674.30" width="1.5" height="10" fill="#aaa"/>
<text x="516.68" y="706.5" font-size="17" fill="#111" stroke="#111" stroke-width="0.55" textLength="22.8" lengthAdjust="spacingAndGlyphs">4h</text>
<rect x="620.95" y="674.30" width="1.5" height="10" fill="#aaa"/>
<text x="610.30" y="706.5" font-size="17" fill="#111" stroke="#111" stroke-width="0.55" textLength="22.8" lengthAdjust="spacingAndGlyphs">5h</text>
<rect x="714.57" y="674.30" width="1.5" height="10" fill="#aaa"/>
<text x="703.92" y="706.5" font-size="17" fill="#111" stroke="#111" stroke-width="0.55" textLength="22.8" lengthAdjust="spacingAndGlyphs">6h</text>
<rect x="808.19" y="674.30" width="1.5" height="10" fill="#aaa"/>
<text x="797.54" y="706.5" font-size="17" fill="#111" stroke="#111" stroke-width="0.55" textLength="22.8" lengthAdjust="spacingAndGlyphs">7h</text>
<rect x="901.81" y="674.30" width="1.5" height="10" fill="#aaa"/>
<text x="891.16" y="706.5" font-size="17" fill="#111" stroke="#111" stroke-width="0.55" textLength="22.8" lengthAdjust="spacingAndGlyphs">8h</text>
<rect x="995.43" y="674.30" width="1.5" height="10" fill="#aaa"/>
<text x="984.78" y="706.5" font-size="17" fill="#111" stroke="#111" stroke-width="0.55" textLength="22.8" lengthAdjust="spacingAndGlyphs">9h</text>
<rect x="1089.05" y="674.30" width="1.5" height="10" fill="#aaa"/>
<text x="1073.10" y="706.5" font-size="17" fill="#111" stroke="#111" stroke-width="0.55" textLength="33.4" lengthAdjust="spacingAndGlyphs">10h</text>
<rect x="1182.67" y="674.30" width="1.5" height="10" fill="#aaa"/>
<text x="1167.07" y="706.5" font-size="17" fill="#111" stroke="#111" stroke-width="0.55" textLength="32.7" lengthAdjust="spacingAndGlyphs">11h</text>
<rect x="1276.29" y="674.30" width="1.5" height="10" fill="#aaa"/>
<text x="1260.34" y="706.5" font-size="17" fill="#111" stroke="#111" stroke-width="0.55" textLength="33.4" lengthAdjust="spacingAndGlyphs">12h</text>
<rect x="1369.91" y="674.30" width="1.5" height="10" fill="#aaa"/>
<text x="1353.96" y="706.5" font-size="17" fill="#111" stroke="#111" stroke-width="0.55" textLength="33.4" lengthAdjust="spacingAndGlyphs">13h</text>
<rect x="1463.53" y="674.30" width="1.5" height="10" fill="#aaa"/>
<text x="1447.58" y="706.5" font-size="17" fill="#111" stroke="#111" stroke-width="0.55" textLength="33.4" lengthAdjust="spacingAndGlyphs">14h</text>
<rect x="1557.15" y="674.30" width="1.5" height="10" fill="#aaa"/>
<text x="1541.20" y="706.5" font-size="17" fill="#111" stroke="#111" stroke-width="0.55" textLength="33.4" lengthAdjust="spacingAndGlyphs">15h</text>
<rect x="1650.77" y="674.30" width="1.5" height="10" fill="#aaa"/>
<text x="1634.82" y="706.5" font-size="17" fill="#111" stroke="#111" stroke-width="0.55" textLength="33.4" lengthAdjust="spacingAndGlyphs">16h</text>
<rect x="1744.39" y="674.30" width="1.5" height="10" fill="#aaa"/>
<text x="1728.44" y="706.5" font-size="17" fill="#111" stroke="#111" stroke-width="0.55" textLength="33.4" lengthAdjust="spacingAndGlyphs">17h</text>
<rect x="1838.01" y="674.30" width="1.5" height="10" fill="#aaa"/>
<text x="1822.06" y="706.5" font-size="17" fill="#111" stroke="#111" stroke-width="0.55" textLength="33.4" lengthAdjust="spacingAndGlyphs">18h</text>
<rect x="1931.63" y="674.30" width="1.5" height="10" fill="#aaa"/>
<text x="1915.68" y="706.5" font-size="17" fill="#111" stroke="#111" stroke-width="0.55" textLength="33.4" lengthAdjust="spacingAndGlyphs">19h</text>
<rect x="2025.25" y="674.30" width="1.5" height="10" fill="#aaa"/>
<text x="2008.95" y="706.5" font-size="17" fill="#111" stroke="#111" stroke-width="0.55" textLength="34.1" lengthAdjust="spacingAndGlyphs">20h</text>
<rect x="2118.87" y="674.30" width="1.5" height="10" fill="#aaa"/>
<text x="2102.92" y="706.5" font-size="17" fill="#111" stroke="#111" stroke-width="0.55" textLength="33.4" lengthAdjust="spacingAndGlyphs">21h</text>
<rect x="2212.49" y="674.30" width="1.5" height="10" fill="#aaa"/>
<text x="2196.19" y="706.5" font-size="17" fill="#111" stroke="#111" stroke-width="0.55" textLength="34.1" lengthAdjust="spacingAndGlyphs">22h</text>
<rect x="2306.11" y="674.30" width="1.5" height="10" fill="#aaa"/>
<text x="2289.81" y="706.5" font-size="17" fill="#111" stroke="#111" stroke-width="0.55" textLength="34.1" lengthAdjust="spacingAndGlyphs">23h</text>
<rect x="2399.73" y="674.30" width="1.5" height="10" fill="#aaa"/>
<text x="2389.08" y="706.5" font-size="17" fill="#111" stroke="#111" stroke-width="0.55" textLength="22.8" lengthAdjust="spacingAndGlyphs">0h</text>
<text x="120.40" y="678.50" font-size="17.5" fill="#333" stroke="#333" stroke-width="0.25" textLength="10.8" lengthAdjust="spacingAndGlyphs">0</text>
<text x="120.40" y="557.90" font-size="17.5" fill="#333" stroke="#333" stroke-width="0.25" textLength="10.8" lengthAdjust="spacingAndGlyphs">5</text>
<text x="109.40" y="437.30" font-size="17.5" fill="#333" stroke="#333" stroke-width="0.25" textLength="21.8" lengthAdjust="spacingAndGlyphs">10</text>
<text x="109.40" y="316.70" font-size="17.5" fill="#333" stroke="#333" stroke-width="0.25" textLength="21.8" lengthAdjust="spacingAndGlyphs">15</text>
<text x="109.40" y="196.10" font-size="17.5" fill="#333" stroke="#333" stroke-width="0.25" textLength="21.8" lengthAdjust="spacingAndGlyphs">20</text>
<text x="109.40" y="75.50" font-size="17.5" fill="#333" stroke="#333" stroke-width="0.25" textLength="21.8" lengthAdjust="spacingAndGlyphs">25</text>
<text transform="translate(86.5,370.3) rotate(-90)" font-size="21.5" fill="#333" stroke="#333" stroke-width="0.35" text-anchor="middle">kW</text>
<rect x="159.3" y="819.2" width="2260.7" height="505.0" fill="#000" opacity="0.35" filter="url(#sh)"/>
<rect x="155.3" y="815.2" width="2260.7" height="505.0" fill="#f1f1f1"/>
<rect x="479.00" y="1151.86" width="322.80" height="84.17" fill="#fff"/>
<rect x="1124.60" y="1151.86" width="322.80" height="84.17" fill="#fff"/>
<rect x="1770.20" y="1151.86" width="322.80" height="84.17" fill="#fff"/>
<rect x="478.50" y="1151.86" width="1" height="84.17" fill="#c9c9c9"/>
<rect x="801.30" y="1151.86" width="1" height="84.17" fill="#c9c9c9"/>
<rect x="1124.10" y="1151.86" width="1" height="84.17" fill="#c9c9c9"/>
<rect x="1446.90" y="1151.86" width="1" height="84.17" fill="#c9c9c9"/>
<rect x="1769.70" y="1151.86" width="1" height="84.17" fill="#c9c9c9"/>
<rect x="2092.50" y="1151.86" width="1" height="84.17" fill="#c9c9c9"/>
<rect x="479.00" y="983.52" width="322.80" height="84.17" fill="#fff"/>
<rect x="1124.60" y="983.52" width="322.80" height="84.17" fill="#fff"/>
<rect x="1770.20" y="983.52" width="322.80" height="84.17" fill="#fff"/>
<rect x="478.50" y="983.52" width="1" height="84.17" fill="#c9c9c9"/>
<rect x="801.30" y="983.52" width="1" height="84.17" fill="#c9c9c9"/>
<rect x="1124.10" y="983.52" width="1" height="84.17" fill="#c9c9c9"/>
<rect x="1446.90" y="983.52" width="1" height="84.17" fill="#c9c9c9"/>
<rect x="1769.70" y="983.52" width="1" height="84.17" fill="#c9c9c9"/>
<rect x="2092.50" y="983.52" width="1" height="84.17" fill="#c9c9c9"/>
<rect x="479.00" y="815.18" width="322.80" height="84.17" fill="#fff"/>
<rect x="1124.60" y="815.18" width="322.80" height="84.17" fill="#fff"/>
<rect x="1770.20" y="815.18" width="322.80" height="84.17" fill="#fff"/>
<rect x="478.50" y="815.18" width="1" height="84.17" fill="#c9c9c9"/>
<rect x="801.30" y="815.18" width="1" height="84.17" fill="#c9c9c9"/>
<rect x="1124.10" y="815.18" width="1" height="84.17" fill="#c9c9c9"/>
<rect x="1446.90" y="815.18" width="1" height="84.17" fill="#c9c9c9"/>
<rect x="1769.70" y="815.18" width="1" height="84.17" fill="#c9c9c9"/>
<rect x="2092.50" y="815.18" width="1" height="84.17" fill="#c9c9c9"/>
<rect x="143.3" y="1235.53" width="2272.7" height="1" fill="#bdbdbd"/>
<rect x="143.3" y="1151.36" width="2272.7" height="1" fill="#bdbdbd"/>
<rect x="143.3" y="1067.19" width="2272.7" height="1" fill="#bdbdbd"/>
<rect x="143.3" y="983.02" width="2272.7" height="1" fill="#bdbdbd"/>
<rect x="143.3" y="898.85" width="2272.7" height="1" fill="#bdbdbd"/>
<rect x="143.3" y="814.68" width="2272.7" height="1" fill="#bdbdbd"/>
<rect x="143.3" y="1319.70" width="12" height="1" fill="#999"/>
<path d="M155.80 1320.20V1303.37H156.76V1320.20ZM156.76 1320.20V1311.78H157.88V1320.20ZM157.88 1320.20V1303.37H159.00V1320.20ZM159.00 1320.20V1311.78H160.12V1320.20ZM160.12 1320.20V1303.37H162.36V1320.20ZM162.36 1320.20V1311.78H163.49V1320.20ZM163.49 1320.20V1303.37H164.61V1320.20ZM164.61 1320.20V1311.78H165.73V1320.20ZM165.73 1320.20V1303.37H166.85V1320.20ZM166.85 1320.20V1311.78H169.09V1320.20ZM169.09 1320.20V1303.37H171.33V1320.20ZM171.33 1320.20V1311.78H173.57V1320.20ZM173.57 1320.20V1303.37H179.18V1320.20ZM179.18 1320.20V1311.78H180.30V1320.20ZM180.30 1320.20V1303.37H181.42V1320.20ZM181.42 1320.20V1311.78H184.78V1320.20ZM184.78 1320.20V1303.37H187.02V1320.20ZM187.02 1320.20V1311.78H188.14V1320.20ZM188.14 1320.20V1303.37H192.63V1320.20ZM192.63 1320.20V1311.78H195.99V1320.20ZM195.99 1320.20V1303.37H201.59V1320.20ZM201.59 1320.20V1311.78H202.71V1320.20ZM202.71 1320.20V1303.37H204.96V1320.20ZM204.96 1320.20V1311.78H206.08V1320.20ZM206.08 1320.20V1303.37H210.56V1320.20ZM210.56 1320.20V1311.78H211.68V1320.20ZM211.68 1320.20V1303.37H212.80V1320.20ZM212.80 1320.20V1311.78H213.92V1320.20ZM213.92 1320.20V1303.37H216.16V1320.20ZM216.16 1320.20V1311.78H217.29V1320.20ZM217.29 1320.20V1303.37H218.41V1320.20ZM218.41 1320.20V1311.78H219.53V1320.20ZM219.53 1320.20V1303.37H225.13V1320.20ZM225.13 1320.20V1294.95H234.10V1320.20ZM234.10 1320.20V1286.53H235.22V1320.20ZM235.22 1320.20V1294.95H236.34V1320.20ZM384.29 1320.20V1311.78H389.89V1320.20ZM389.89 1320.20V1286.53H391.01V1320.20ZM391.01 1320.20V1244.45H392.14V1320.20ZM392.14 1320.20V1311.78H500.86V1320.20ZM500.86 1320.20V1303.37H503.10V1320.20ZM503.10 1320.20V1311.78H504.22V1320.20ZM504.22 1320.20V1303.37H506.46V1320.20ZM506.46 1320.20V1311.78H507.58V1320.20ZM507.58 1320.20V1303.37H509.82V1320.20ZM509.82 1320.20V1311.78H510.94V1320.20ZM510.94 1320.20V1303.37H513.19V1320.20ZM513.19 1320.20V1311.78H515.43V1320.20ZM515.43 1320.20V1303.37H517.67V1320.20ZM517.67 1320.20V1311.78H519.91V1320.20ZM519.91 1320.20V1303.37H527.76V1320.20ZM527.76 1320.20V1311.78H530.00V1320.20ZM530.00 1320.20V1303.37H531.12V1320.20ZM531.12 1320.20V1311.78H532.24V1320.20ZM532.24 1320.20V1294.95H559.14V1320.20ZM707.09 1320.20V1303.37H709.33V1320.20ZM709.33 1320.20V1311.78H712.69V1320.20ZM712.69 1320.20V1236.03H713.81V1320.20ZM713.81 1320.20V1303.37H720.54V1320.20ZM720.54 1320.20V1311.78H721.66V1320.20ZM721.66 1320.20V1303.37H728.39V1320.20ZM728.39 1320.20V1311.78H729.51V1320.20ZM729.51 1320.20V1303.37H730.63V1320.20ZM730.63 1320.20V1311.78H731.75V1320.20ZM731.75 1320.20V1303.37H732.87V1320.20ZM732.87 1320.20V1311.78H736.23V1320.20ZM736.23 1320.20V1303.37H738.47V1320.20ZM738.47 1320.20V1311.78H739.59V1320.20ZM739.59 1320.20V1303.37H742.96V1320.20ZM742.96 1320.20V1311.78H744.08V1320.20ZM744.08 1320.20V1303.37H747.44V1320.20ZM747.44 1320.20V1311.78H748.56V1320.20ZM748.56 1320.20V1303.37H749.68V1320.20ZM749.68 1320.20V1311.78H751.92V1320.20ZM751.92 1320.20V1303.37H754.16V1320.20ZM754.16 1320.20V1311.78H755.29V1320.20ZM755.29 1320.20V1303.37H756.41V1320.20ZM756.41 1320.20V1311.78H757.53V1320.20ZM757.53 1320.20V1303.37H766.49V1320.20ZM766.49 1320.20V1311.78H767.61V1320.20ZM767.61 1320.20V1303.37H768.74V1320.20ZM768.74 1320.20V1311.78H772.10V1320.20ZM772.10 1320.20V1303.37H776.58V1320.20ZM776.58 1320.20V1311.78H777.70V1320.20ZM777.70 1320.20V1303.37H785.55V1320.20ZM785.55 1320.20V1311.78H786.67V1320.20ZM786.67 1320.20V1303.37H790.03V1320.20ZM790.03 1320.20V1311.78H791.15V1320.20ZM791.15 1320.20V1303.37H794.51V1320.20ZM794.51 1320.20V1311.78H795.64V1320.20ZM795.64 1320.20V1303.37H797.88V1320.20ZM797.88 1320.20V1311.78H800.12V1320.20ZM800.12 1320.20V1303.37H803.48V1320.20ZM803.48 1320.20V1311.78H806.84V1320.20ZM806.84 1320.20V1303.37H809.09V1320.20ZM809.09 1320.20V1311.78H810.21V1320.20ZM810.21 1320.20V1303.37H811.33V1320.20ZM811.33 1320.20V1311.78H812.45V1320.20ZM812.45 1320.20V1303.37H814.69V1320.20ZM814.69 1320.20V1311.78H815.81V1320.20ZM815.81 1320.20V1303.37H816.93V1320.20ZM816.93 1320.20V1311.78H818.05V1320.20ZM818.05 1320.20V1303.37H823.66V1320.20ZM823.66 1320.20V1311.78H824.78V1320.20ZM824.78 1320.20V1303.37H825.90V1320.20ZM825.90 1320.20V1311.78H828.14V1320.20ZM828.14 1320.20V1303.37H829.26V1320.20ZM829.26 1320.20V1311.78H830.38V1320.20ZM830.38 1320.20V1303.37H837.11V1320.20ZM837.11 1320.20V1294.95H838.23V1320.20ZM838.23 1320.20V1286.53H839.35V1320.20ZM839.35 1320.20V1303.37H847.19V1320.20ZM847.19 1320.20V1294.95H848.31V1320.20ZM848.31 1320.20V1303.37H859.52V1320.20ZM859.52 1320.20V1294.95H860.64V1320.20ZM860.64 1320.20V1303.37H865.13V1320.20ZM865.13 1320.20V1286.53H866.25V1320.20ZM866.25 1320.20V1294.95H872.97V1320.20ZM872.97 1320.20V1286.53H874.09V1320.20ZM874.09 1320.20V1294.95H879.70V1320.20ZM879.70 1320.20V1286.53H880.82V1320.20ZM880.82 1320.20V1294.95H881.94V1320.20ZM1029.89 1320.20V1303.37H1033.25V1320.20ZM1033.25 1320.20V1311.78H1035.49V1320.20ZM1035.49 1320.20V1303.37H1037.74V1320.20ZM1037.74 1320.20V1311.78H1038.86V1320.20ZM1038.86 1320.20V1303.37H1046.70V1320.20ZM1046.70 1320.20V1311.78H1047.82V1320.20ZM1047.82 1320.20V1303.37H1082.57V1320.20ZM1082.57 1320.20V1311.78H1083.69V1320.20ZM1083.69 1320.20V1303.37H1092.66V1320.20ZM1092.66 1320.20V1311.78H1093.78V1320.20ZM1093.78 1320.20V1303.37H1096.02V1320.20ZM1096.02 1320.20V1311.78H1097.14V1320.20ZM1097.14 1320.20V1303.37H1106.11V1320.20ZM1106.11 1320.20V1294.95H1107.23V1320.20ZM1107.23 1320.20V1303.37H1108.35V1320.20ZM1108.35 1320.20V1294.95H1109.47V1320.20ZM1109.47 1320.20V1303.37H1110.59V1320.20ZM1110.59 1320.20V1294.95H1111.71V1320.20ZM1111.71 1320.20V1303.37H1115.07V1320.20ZM1115.07 1320.20V1294.95H1116.19V1320.20ZM1116.19 1320.20V1303.37H1119.56V1320.20ZM1119.56 1320.20V1294.95H1121.80V1320.20ZM1121.80 1320.20V1303.37H1122.92V1320.20ZM1122.92 1320.20V1294.95H1124.04V1320.20ZM1124.04 1320.20V1303.37H1127.40V1320.20ZM1127.40 1320.20V1294.95H1128.52V1320.20ZM1128.52 1320.20V1303.37H1130.76V1320.20ZM1130.76 1320.20V1294.95H1139.73V1320.20ZM1139.73 1320.20V1303.37H1145.34V1320.20ZM1145.34 1320.20V1294.95H1146.46V1320.20ZM1146.46 1320.20V1303.37H1152.06V1320.20ZM1152.06 1320.20V1294.95H1155.42V1320.20ZM1155.42 1320.20V1303.37H1156.54V1320.20ZM1156.54 1320.20V1294.95H1157.66V1320.20ZM1157.66 1320.20V1303.37H1158.79V1320.20ZM1158.79 1320.20V1294.95H1169.99V1320.20ZM1169.99 1320.20V1286.53H1172.24V1320.20ZM1172.24 1320.20V1294.95H1174.48V1320.20ZM1174.48 1320.20V1286.53H1175.60V1320.20ZM1175.60 1320.20V1294.95H1178.96V1320.20ZM1178.96 1320.20V1286.53H1180.08V1320.20ZM1180.08 1320.20V1294.95H1183.44V1320.20ZM1183.44 1320.20V1286.53H1184.56V1320.20ZM1184.56 1320.20V1294.95H1198.01V1320.20ZM1198.01 1320.20V1286.53H1200.26V1320.20ZM1200.26 1320.20V1278.12H1201.38V1320.20ZM1201.38 1320.20V1286.53H1202.50V1320.20ZM1202.50 1320.20V1278.12H1203.62V1320.20ZM1203.62 1320.20V1286.53H1204.74V1320.20ZM1352.69 1320.20V1311.78H1356.05V1320.20ZM1356.05 1320.20V1303.37H1359.41V1320.20ZM1359.41 1320.20V1311.78H1360.54V1320.20ZM1360.54 1320.20V1303.37H1361.66V1320.20ZM1361.66 1320.20V1311.78H1366.14V1320.20ZM1366.14 1320.20V1303.37H1367.26V1320.20ZM1367.26 1320.20V1311.78H1372.86V1320.20ZM1372.86 1320.20V1303.37H1373.99V1320.20ZM1373.99 1320.20V1311.78H1375.11V1320.20ZM1375.11 1320.20V1303.37H1376.23V1320.20ZM1376.23 1320.20V1311.78H1379.59V1320.20ZM1379.59 1320.20V1303.37H1381.83V1320.20ZM1381.83 1320.20V1311.78H1386.31V1320.20ZM1386.31 1320.20V1303.37H1387.44V1320.20ZM1387.44 1320.20V1311.78H1391.92V1320.20ZM1391.92 1320.20V1303.37H1393.04V1320.20ZM1393.04 1320.20V1311.78H1394.16V1320.20ZM1394.16 1320.20V1303.37H1395.28V1320.20ZM1395.28 1320.20V1311.78H1397.52V1320.20ZM1397.52 1320.20V1303.37H1399.76V1320.20ZM1399.76 1320.20V1311.78H1405.37V1320.20ZM1405.37 1320.20V1303.37H1406.49V1320.20ZM1406.49 1320.20V1311.78H1408.73V1320.20ZM1408.73 1320.20V1303.37H1409.85V1320.20ZM1409.85 1320.20V1311.78H1412.09V1320.20ZM1412.09 1320.20V1303.37H1414.34V1320.20ZM1414.34 1320.20V1311.78H1424.42V1320.20ZM1424.42 1320.20V1303.37H1425.54V1320.20ZM1425.54 1320.20V1311.78H1447.96V1320.20ZM1447.96 1320.20V1303.37H1449.08V1320.20ZM1449.08 1320.20V1311.78H1459.17V1320.20ZM1459.17 1320.20V1303.37H1460.29V1320.20ZM1460.29 1320.20V1311.78H1467.01V1320.20ZM1467.01 1320.20V1303.37H1468.14V1320.20ZM1468.14 1320.20V1311.78H1486.07V1320.20ZM1486.07 1320.20V1303.37H1487.19V1320.20ZM1487.19 1320.20V1311.78H1491.67V1320.20ZM1491.67 1320.20V1303.37H1492.79V1320.20ZM1492.79 1320.20V1311.78H1493.91V1320.20ZM1493.91 1320.20V1294.95H1495.04V1320.20ZM1495.04 1320.20V1311.78H1507.36V1320.20ZM1507.36 1320.20V1303.37H1508.49V1320.20ZM1508.49 1320.20V1311.78H1526.42V1320.20ZM1526.42 1320.20V1303.37H1527.54V1320.20ZM1527.54 1320.20V1311.78H1528.66V1320.20ZM1528.66 1320.20V1303.37H1529.78V1320.20ZM1529.78 1320.20V1311.78H1536.51V1320.20ZM1536.51 1320.20V1303.37H1537.63V1320.20ZM1537.63 1320.20V1311.78H1540.99V1320.20ZM1540.99 1320.20V1303.37H1542.11V1320.20ZM1542.11 1320.20V1311.78H1574.61V1320.20ZM1574.61 1320.20V1303.37H1575.74V1320.20ZM1575.74 1320.20V1311.78H1584.70V1320.20ZM1584.70 1320.20V1303.37H1585.82V1320.20ZM1585.82 1320.20V1311.78H1586.94V1320.20ZM1586.94 1320.20V1303.37H1588.06V1320.20ZM1588.06 1320.20V1311.78H1599.27V1320.20ZM1599.27 1320.20V1303.37H1600.39V1320.20ZM1600.39 1320.20V1311.78H1613.84V1320.20ZM1613.84 1320.20V1303.37H1614.96V1320.20ZM1614.96 1320.20V1311.78H1618.33V1320.20ZM1618.33 1320.20V1303.37H1619.45V1320.20ZM1619.45 1320.20V1311.78H1642.99V1320.20ZM1642.99 1320.20V1294.95H1645.23V1320.20ZM1645.23 1320.20V1311.78H1666.52V1320.20ZM1666.52 1320.20V1303.37H1667.64V1320.20ZM1667.64 1320.20V1311.78H1669.89V1320.20ZM1669.89 1320.20V1303.37H1671.01V1320.20ZM1671.01 1320.20V1311.78H1684.46V1320.20ZM1684.46 1320.20V1303.37H1685.58V1320.20ZM1685.58 1320.20V1311.78H1688.94V1320.20ZM1688.94 1320.20V1303.37H1690.06V1320.20ZM1690.06 1320.20V1311.78H1694.54V1320.20ZM1694.54 1320.20V1303.37H1695.66V1320.20ZM1695.66 1320.20V1311.78H1700.15V1320.20ZM1700.15 1320.20V1303.37H1722.56V1320.20ZM1722.56 1320.20V1294.95H1724.81V1320.20ZM1724.81 1320.20V1303.37H1729.29V1320.20ZM1729.29 1320.20V1294.95H1730.41V1320.20ZM1730.41 1320.20V1303.37H1749.46V1320.20ZM1749.46 1320.20V1294.95H1750.59V1320.20ZM1750.59 1320.20V1303.37H1762.91V1320.20ZM1762.91 1320.20V1294.95H1764.04V1320.20ZM1764.04 1320.20V1303.37H1770.76V1320.20ZM1770.76 1320.20V1294.95H1771.88V1320.20ZM1771.88 1320.20V1303.37H1788.69V1320.20ZM1788.69 1320.20V1286.53H1790.94V1320.20ZM1790.94 1320.20V1303.37H1794.30V1320.20ZM1794.30 1320.20V1294.95H1795.42V1320.20ZM1795.42 1320.20V1303.37H1811.11V1320.20ZM1811.11 1320.20V1294.95H1812.23V1320.20ZM1812.23 1320.20V1303.37H1816.71V1320.20ZM1816.71 1320.20V1294.95H1817.84V1320.20ZM1817.84 1320.20V1303.37H1829.04V1320.20ZM1829.04 1320.20V1294.95H1831.29V1320.20ZM1831.29 1320.20V1303.37H1848.10V1320.20ZM1848.10 1320.20V1294.95H1849.22V1320.20ZM1849.22 1320.20V1303.37H1851.46V1320.20ZM1851.46 1320.20V1294.95H1852.58V1320.20ZM1852.58 1320.20V1303.37H1859.31V1320.20ZM1859.31 1320.20V1294.95H1860.43V1320.20ZM1860.43 1320.20V1303.37H1868.27V1320.20ZM1868.27 1320.20V1294.95H1869.39V1320.20ZM1869.39 1320.20V1303.37H1888.45V1320.20ZM1888.45 1320.20V1294.95H1889.57V1320.20ZM1889.57 1320.20V1303.37H1896.29V1320.20ZM1896.29 1320.20V1294.95H1897.41V1320.20ZM1897.41 1320.20V1311.78H1913.11V1320.20ZM1913.11 1320.20V1303.37H1914.23V1320.20ZM1914.23 1320.20V1311.78H1918.71V1320.20ZM1918.71 1320.20V1303.37H1919.83V1320.20ZM1919.83 1320.20V1311.78H1920.95V1320.20ZM1920.95 1320.20V1303.37H1922.07V1320.20ZM1922.07 1320.20V1311.78H1923.19V1320.20ZM1923.19 1320.20V1303.37H1925.44V1320.20ZM1925.44 1320.20V1311.78H1927.68V1320.20ZM1927.68 1320.20V1303.37H1928.80V1320.20ZM1928.80 1320.20V1311.78H1929.92V1320.20ZM1929.92 1320.20V1294.95H1931.04V1320.20ZM1931.04 1320.20V1311.78H1932.16V1320.20ZM1932.16 1320.20V1303.37H1933.28V1320.20ZM1933.28 1320.20V1311.78H1940.01V1320.20ZM1940.01 1320.20V1303.37H1941.13V1320.20ZM1941.13 1320.20V1311.78H1943.37V1320.20ZM1943.37 1320.20V1303.37H1944.49V1320.20ZM1944.49 1320.20V1311.78H1954.58V1320.20ZM1954.58 1320.20V1303.37H1955.70V1320.20ZM1955.70 1320.20V1311.78H1962.42V1320.20ZM1962.42 1320.20V1303.37H1963.54V1320.20ZM1963.54 1320.20V1311.78H1974.75V1320.20ZM1974.75 1320.20V1303.37H1975.87V1320.20ZM1975.87 1320.20V1311.78H1992.69V1320.20ZM1992.69 1320.20V1303.37H1993.81V1320.20ZM1993.81 1320.20V1311.78H1996.05V1320.20ZM1996.05 1320.20V1303.37H1997.17V1320.20ZM1997.17 1320.20V1311.78H1998.29V1320.20ZM1998.29 1320.20V1303.37H1999.41V1320.20ZM1999.41 1320.20V1311.78H2011.74V1320.20ZM2011.74 1320.20V1303.37H2012.86V1320.20ZM2012.86 1320.20V1311.78H2015.10V1320.20ZM2015.10 1320.20V1303.37H2017.34V1320.20ZM2017.34 1320.20V1311.78H2026.31V1320.20ZM2026.31 1320.20V1303.37H2027.43V1320.20ZM2027.43 1320.20V1311.78H2028.55V1320.20ZM2028.55 1320.20V1303.37H2029.67V1320.20ZM2029.67 1320.20V1311.78H2045.36V1320.20ZM2045.36 1320.20V1303.37H2050.97V1320.20ZM2050.97 1320.20V1294.95H2052.09V1320.20ZM2052.09 1320.20V1303.37H2056.57V1320.20ZM2056.57 1320.20V1294.95H2057.69V1320.20ZM2057.69 1320.20V1303.37H2058.81V1320.20ZM2058.81 1320.20V1294.95H2059.94V1320.20ZM2059.94 1320.20V1303.37H2070.02V1320.20ZM2070.02 1320.20V1294.95H2071.14V1320.20ZM2071.14 1320.20V1303.37H2075.63V1320.20ZM2075.63 1320.20V1294.95H2077.87V1320.20ZM2077.87 1320.20V1303.37H2083.47V1320.20ZM2083.47 1320.20V1294.95H2084.59V1320.20ZM2084.59 1320.20V1303.37H2090.20V1320.20ZM2090.20 1320.20V1294.95H2091.32V1320.20ZM2091.32 1320.20V1303.37H2094.68V1320.20ZM2094.68 1320.20V1311.78H2095.80V1320.20ZM2095.80 1320.20V1303.37H2099.16V1320.20ZM2099.16 1320.20V1311.78H2100.29V1320.20ZM2100.29 1320.20V1303.37H2103.65V1320.20ZM2103.65 1320.20V1311.78H2104.77V1320.20ZM2104.77 1320.20V1303.37H2117.10V1320.20ZM2117.10 1320.20V1311.78H2118.22V1320.20ZM2118.22 1320.20V1303.37H2133.91V1320.20ZM2133.91 1320.20V1294.95H2135.03V1320.20ZM2135.03 1320.20V1311.78H2136.15V1320.20ZM2136.15 1320.20V1294.95H2137.27V1320.20ZM2137.27 1320.20V1311.78H2138.39V1320.20ZM2138.39 1320.20V1294.95H2139.51V1320.20ZM2139.51 1320.20V1303.37H2142.88V1320.20ZM2142.88 1320.20V1294.95H2144.00V1320.20ZM2144.00 1320.20V1303.37H2148.48V1320.20ZM2148.48 1320.20V1294.95H2149.60V1320.20ZM2149.60 1320.20V1303.37H2152.96V1320.20ZM2152.96 1320.20V1294.95H2154.09V1320.20ZM2154.09 1320.20V1303.37H2156.33V1320.20ZM2156.33 1320.20V1294.95H2157.45V1320.20ZM2157.45 1320.20V1286.53H2158.57V1320.20ZM2158.57 1320.20V1294.95H2163.05V1320.20ZM2163.05 1320.20V1286.53H2164.17V1320.20ZM2164.17 1320.20V1294.95H2166.41V1320.20ZM2166.41 1320.20V1286.53H2167.54V1320.20ZM2167.54 1320.20V1294.95H2169.78V1320.20ZM2169.78 1320.20V1286.53H2170.90V1320.20ZM2170.90 1320.20V1294.95H2172.02V1320.20ZM2172.02 1320.20V1286.53H2173.14V1320.20Z" fill="#a0ebc3"/>
<path d="M236.34 1320.20V1294.95H243.06V1320.20ZM243.06 1320.20V1303.37H252.03V1320.20ZM252.03 1320.20V1286.53H253.15V1320.20ZM253.15 1320.20V1303.37H255.39V1320.20ZM255.39 1320.20V1252.86H256.51V1320.20ZM256.51 1320.20V1219.20H257.64V1320.20ZM257.64 1320.20V1210.78H258.76V1320.20ZM258.76 1320.20V1092.94H259.88V1320.20ZM259.88 1320.20V1084.52H261.00V1320.20ZM261.00 1320.20V1092.94H262.12V1320.20ZM262.12 1320.20V865.68H263.24V1320.20ZM263.24 1320.20V958.27H264.36V1320.20ZM264.36 1320.20V1135.03H266.60V1320.20ZM266.60 1320.20V1261.28H267.72V1320.20ZM267.72 1320.20V1210.78H268.84V1320.20ZM268.84 1320.20V1261.28H269.96V1320.20ZM269.96 1320.20V1236.03H271.09V1320.20ZM271.09 1320.20V1252.86H273.33V1320.20ZM273.33 1320.20V1160.28H274.45V1320.20ZM274.45 1320.20V1202.36H275.57V1320.20ZM275.57 1320.20V1227.61H276.69V1320.20ZM276.69 1320.20V1252.86H277.81V1320.20ZM277.81 1320.20V1219.20H278.93V1320.20ZM278.93 1320.20V1244.45H280.05V1320.20ZM280.05 1320.20V1219.20H281.17V1320.20ZM281.17 1320.20V1252.86H282.29V1320.20ZM282.29 1320.20V1261.28H283.41V1320.20ZM283.41 1320.20V1076.11H284.54V1320.20ZM284.54 1320.20V890.93H285.66V1320.20ZM285.66 1320.20V865.68H286.78V1320.20ZM286.78 1320.20V1177.11H287.90V1320.20ZM287.90 1320.20V1252.86H289.02V1320.20ZM289.02 1320.20V1236.03H290.14V1320.20ZM290.14 1320.20V1294.95H291.26V1320.20ZM291.26 1320.20V1303.37H292.38V1320.20ZM292.38 1320.20V1278.12H293.50V1320.20ZM293.50 1320.20V1286.53H295.74V1320.20ZM295.74 1320.20V1303.37H296.86V1320.20ZM296.86 1320.20V1286.53H297.99V1320.20ZM297.99 1320.20V1278.12H299.11V1320.20ZM299.11 1320.20V1303.37H300.23V1320.20ZM300.23 1320.20V1278.12H302.47V1320.20ZM302.47 1320.20V1261.28H303.59V1320.20ZM303.59 1320.20V1185.53H304.71V1320.20ZM304.71 1320.20V1269.70H305.83V1320.20ZM305.83 1320.20V1286.53H306.95V1320.20ZM306.95 1320.20V1269.70H308.07V1320.20ZM308.07 1320.20V1286.53H309.19V1320.20ZM309.19 1320.20V1269.70H310.31V1320.20ZM310.31 1320.20V1278.12H311.44V1320.20ZM311.44 1320.20V1303.37H312.56V1320.20ZM312.56 1320.20V1294.95H313.68V1320.20ZM313.68 1320.20V1278.12H315.92V1320.20ZM315.92 1320.20V1286.53H317.04V1320.20ZM317.04 1320.20V1269.70H318.16V1320.20ZM318.16 1320.20V1278.12H319.28V1320.20ZM319.28 1320.20V1294.95H320.40V1320.20ZM320.40 1320.20V1261.28H322.64V1320.20ZM322.64 1320.20V1219.20H323.76V1320.20ZM323.76 1320.20V1160.28H324.89V1320.20ZM324.89 1320.20V840.43H326.01V1320.20ZM326.01 1320.20V1126.61H327.13V1320.20ZM327.13 1320.20V949.85H328.25V1320.20ZM328.25 1320.20V1143.44H329.37V1320.20ZM329.37 1320.20V1269.70H330.49V1320.20ZM330.49 1320.20V1252.86H331.61V1320.20ZM331.61 1320.20V1286.53H332.73V1320.20ZM332.73 1320.20V1261.28H333.85V1320.20ZM333.85 1320.20V1294.95H336.09V1320.20ZM336.09 1320.20V1244.45H337.21V1320.20ZM337.21 1320.20V1294.95H338.34V1320.20ZM338.34 1320.20V1286.53H339.46V1320.20ZM339.46 1320.20V1210.78H340.58V1320.20ZM340.58 1320.20V1050.86H341.70V1320.20ZM341.70 1320.20V848.85H342.82V1320.20ZM342.82 1320.20V1034.02H343.94V1320.20ZM343.94 1320.20V1227.61H345.06V1320.20ZM345.06 1320.20V1193.95H346.18V1320.20ZM346.18 1320.20V1236.03H347.30V1320.20ZM347.30 1320.20V1227.61H348.42V1320.20ZM348.42 1320.20V1286.53H351.79V1320.20ZM351.79 1320.20V1294.95H352.91V1320.20ZM352.91 1320.20V1252.86H355.15V1320.20ZM355.15 1320.20V1244.45H356.27V1320.20ZM356.27 1320.20V1236.03H357.39V1320.20ZM357.39 1320.20V1261.28H358.51V1320.20ZM358.51 1320.20V1185.53H359.63V1320.20ZM359.63 1320.20V1244.45H360.75V1320.20ZM360.75 1320.20V1210.78H361.87V1320.20ZM361.87 1320.20V1261.28H362.99V1320.20ZM362.99 1320.20V1244.45H364.11V1320.20ZM364.11 1320.20V1219.20H365.24V1320.20ZM365.24 1320.20V1244.45H366.36V1320.20ZM366.36 1320.20V1252.86H367.48V1320.20ZM367.48 1320.20V1269.70H368.60V1320.20ZM368.60 1320.20V1244.45H369.72V1320.20ZM369.72 1320.20V1227.61H370.84V1320.20ZM370.84 1320.20V1160.28H371.96V1320.20ZM371.96 1320.20V1244.45H373.08V1320.20ZM373.08 1320.20V1278.12H375.32V1320.20ZM375.32 1320.20V1269.70H376.44V1320.20ZM376.44 1320.20V1286.53H377.56V1320.20ZM377.56 1320.20V1303.37H379.81V1320.20ZM379.81 1320.20V1286.53H380.93V1320.20ZM380.93 1320.20V1303.37H382.05V1320.20ZM382.05 1320.20V1294.95H383.17V1320.20ZM383.17 1320.20V1286.53H384.29V1320.20ZM559.14 1320.20V1303.37H560.26V1320.20ZM560.26 1320.20V1286.53H562.50V1320.20ZM562.50 1320.20V1303.37H563.62V1320.20ZM563.62 1320.20V1286.53H564.74V1320.20ZM564.74 1320.20V1303.37H565.86V1320.20ZM565.86 1320.20V1286.53H566.99V1320.20ZM566.99 1320.20V1294.95H568.11V1320.20ZM568.11 1320.20V1286.53H569.23V1320.20ZM569.23 1320.20V1303.37H572.59V1320.20ZM572.59 1320.20V1294.95H573.71V1320.20ZM573.71 1320.20V1261.28H574.83V1320.20ZM574.83 1320.20V1236.03H575.95V1320.20ZM575.95 1320.20V1160.28H577.07V1320.20ZM577.07 1320.20V1168.69H578.19V1320.20ZM578.19 1320.20V1000.35H579.31V1320.20ZM579.31 1320.20V865.68H580.44V1320.20ZM580.44 1320.20V1126.61H581.56V1320.20ZM581.56 1320.20V874.10H582.68V1320.20ZM582.68 1320.20V1177.11H583.80V1320.20ZM583.80 1320.20V1092.94H584.92V1320.20ZM584.92 1320.20V1244.45H587.16V1320.20ZM587.16 1320.20V1202.36H588.28V1320.20ZM588.28 1320.20V1109.78H589.40V1320.20ZM589.40 1320.20V890.93H590.52V1320.20ZM590.52 1320.20V1151.86H591.64V1320.20ZM591.64 1320.20V1210.78H592.76V1320.20ZM592.76 1320.20V1219.20H593.89V1320.20ZM593.89 1320.20V1286.53H595.01V1320.20ZM595.01 1320.20V1252.86H596.13V1320.20ZM596.13 1320.20V1286.53H597.25V1320.20ZM597.25 1320.20V1236.03H598.37V1320.20ZM598.37 1320.20V1084.52H599.49V1320.20ZM599.49 1320.20V907.77H600.61V1320.20ZM600.61 1320.20V899.35H601.73V1320.20ZM601.73 1320.20V1202.36H602.85V1320.20ZM602.85 1320.20V1050.86H603.97V1320.20ZM603.97 1320.20V1168.69H605.09V1320.20ZM605.09 1320.20V933.02H606.21V1320.20ZM606.21 1320.20V1202.36H607.34V1320.20ZM607.34 1320.20V1269.70H608.46V1320.20ZM608.46 1320.20V1286.53H609.58V1320.20ZM609.58 1320.20V1236.03H610.70V1320.20ZM610.70 1320.20V1168.69H611.82V1320.20ZM611.82 1320.20V1244.45H612.94V1320.20ZM612.94 1320.20V1286.53H614.06V1320.20ZM614.06 1320.20V1269.70H615.18V1320.20ZM615.18 1320.20V1261.28H616.30V1320.20ZM616.30 1320.20V1278.12H617.42V1320.20ZM617.42 1320.20V1244.45H618.54V1320.20ZM618.54 1320.20V1151.86H619.66V1320.20ZM619.66 1320.20V991.94H620.79V1320.20ZM620.79 1320.20V1177.11H621.91V1320.20ZM621.91 1320.20V1252.86H623.03V1320.20ZM623.03 1320.20V1278.12H624.15V1320.20ZM624.15 1320.20V1269.70H625.27V1320.20ZM625.27 1320.20V1303.37H626.39V1320.20ZM626.39 1320.20V1278.12H627.51V1320.20ZM627.51 1320.20V1244.45H628.63V1320.20ZM628.63 1320.20V1252.86H629.75V1320.20ZM629.75 1320.20V1269.70H630.87V1320.20ZM630.87 1320.20V1236.03H631.99V1320.20ZM631.99 1320.20V1168.69H633.11V1320.20ZM633.11 1320.20V1252.86H634.24V1320.20ZM634.24 1320.20V1185.53H635.36V1320.20ZM635.36 1320.20V1269.70H636.48V1320.20ZM636.48 1320.20V1219.20H637.60V1320.20ZM637.60 1320.20V1286.53H638.72V1320.20ZM638.72 1320.20V1261.28H639.84V1320.20ZM639.84 1320.20V1236.03H640.96V1320.20ZM640.96 1320.20V1252.86H642.08V1320.20ZM642.08 1320.20V1294.95H643.20V1320.20ZM643.20 1320.20V1278.12H644.32V1320.20ZM644.32 1320.20V1244.45H645.44V1320.20ZM645.44 1320.20V1269.70H646.56V1320.20ZM646.56 1320.20V1303.37H648.81V1320.20ZM648.81 1320.20V1286.53H649.93V1320.20ZM649.93 1320.20V1294.95H651.05V1320.20ZM651.05 1320.20V1303.37H654.41V1320.20ZM654.41 1320.20V1278.12H655.53V1320.20ZM655.53 1320.20V1286.53H656.65V1320.20ZM656.65 1320.20V1303.37H658.89V1320.20ZM658.89 1320.20V1286.53H660.01V1320.20ZM660.01 1320.20V1244.45H662.26V1320.20ZM662.26 1320.20V1160.28H663.38V1320.20ZM663.38 1320.20V991.94H664.50V1320.20ZM664.50 1320.20V958.27H665.62V1320.20ZM665.62 1320.20V1059.27H666.74V1320.20ZM666.74 1320.20V1210.78H667.86V1320.20ZM667.86 1320.20V1244.45H668.98V1320.20ZM668.98 1320.20V1185.53H670.10V1320.20ZM670.10 1320.20V991.94H671.22V1320.20ZM671.22 1320.20V1193.95H672.34V1320.20ZM672.34 1320.20V1261.28H673.46V1320.20ZM673.46 1320.20V1252.86H674.59V1320.20ZM674.59 1320.20V1219.20H675.71V1320.20ZM675.71 1320.20V1244.45H676.83V1320.20ZM676.83 1320.20V1269.70H677.95V1320.20ZM677.95 1320.20V1185.53H679.07V1320.20ZM679.07 1320.20V1286.53H680.19V1320.20ZM680.19 1320.20V1244.45H681.31V1320.20ZM681.31 1320.20V1294.95H682.43V1320.20ZM682.43 1320.20V1252.86H683.55V1320.20ZM683.55 1320.20V1286.53H684.67V1320.20ZM684.67 1320.20V1269.70H685.79V1320.20ZM685.79 1320.20V1278.12H686.91V1320.20ZM686.91 1320.20V1177.11H688.04V1320.20ZM688.04 1320.20V1261.28H689.16V1320.20ZM689.16 1320.20V1252.86H690.28V1320.20ZM690.28 1320.20V1202.36H691.40V1320.20ZM691.40 1320.20V1286.53H692.52V1320.20ZM692.52 1320.20V1261.28H693.64V1320.20ZM693.64 1320.20V1278.12H694.76V1320.20ZM694.76 1320.20V1185.53H695.88V1320.20ZM695.88 1320.20V1278.12H697.00V1320.20ZM697.00 1320.20V1269.70H698.12V1320.20ZM698.12 1320.20V1286.53H699.24V1320.20ZM699.24 1320.20V1294.95H700.36V1320.20ZM700.36 1320.20V1286.53H703.73V1320.20ZM703.73 1320.20V1303.37H704.85V1320.20ZM704.85 1320.20V1286.53H707.09V1320.20ZM881.94 1320.20V1294.95H895.39V1320.20ZM895.39 1320.20V1269.70H896.51V1320.20ZM896.51 1320.20V1236.03H897.63V1320.20ZM897.63 1320.20V1244.45H898.75V1320.20ZM898.75 1320.20V1210.78H899.87V1320.20ZM899.87 1320.20V1168.69H900.99V1320.20ZM900.99 1320.20V1185.53H902.11V1320.20ZM902.11 1320.20V1261.28H903.24V1320.20ZM903.24 1320.20V1269.70H904.36V1320.20ZM904.36 1320.20V1252.86H905.48V1320.20ZM905.48 1320.20V1135.03H906.60V1320.20ZM906.60 1320.20V991.94H907.72V1320.20ZM907.72 1320.20V1151.86H908.84V1320.20ZM908.84 1320.20V1269.70H909.96V1320.20ZM909.96 1320.20V1278.12H911.08V1320.20ZM911.08 1320.20V1269.70H912.20V1320.20ZM912.20 1320.20V1278.12H914.44V1320.20ZM914.44 1320.20V1236.03H915.56V1320.20ZM915.56 1320.20V1261.28H916.69V1320.20ZM916.69 1320.20V1286.53H917.81V1320.20ZM917.81 1320.20V1252.86H918.93V1320.20ZM918.93 1320.20V1160.28H920.05V1320.20ZM920.05 1320.20V1177.11H921.17V1320.20ZM921.17 1320.20V1278.12H922.29V1320.20ZM922.29 1320.20V1286.53H923.41V1320.20ZM923.41 1320.20V1252.86H924.53V1320.20ZM924.53 1320.20V1210.78H925.65V1320.20ZM925.65 1320.20V1151.86H926.77V1320.20ZM926.77 1320.20V1244.45H927.89V1320.20ZM927.89 1320.20V1193.95H929.01V1320.20ZM929.01 1320.20V1244.45H930.14V1320.20ZM930.14 1320.20V1252.86H931.26V1320.20ZM931.26 1320.20V1244.45H932.38V1320.20ZM932.38 1320.20V1269.70H934.62V1320.20ZM934.62 1320.20V1244.45H935.74V1320.20ZM935.74 1320.20V1151.86H936.86V1320.20ZM936.86 1320.20V1252.86H937.98V1320.20ZM937.98 1320.20V1261.28H939.10V1320.20ZM939.10 1320.20V1269.70H940.22V1320.20ZM940.22 1320.20V1303.37H941.34V1320.20ZM941.34 1320.20V1294.95H942.46V1320.20ZM942.46 1320.20V1261.28H943.59V1320.20ZM943.59 1320.20V1278.12H944.71V1320.20ZM944.71 1320.20V1244.45H945.83V1320.20ZM945.83 1320.20V1177.11H946.95V1320.20ZM946.95 1320.20V1092.94H948.07V1320.20ZM948.07 1320.20V1252.86H949.19V1320.20ZM949.19 1320.20V1261.28H950.31V1320.20ZM950.31 1320.20V1286.53H951.43V1320.20ZM951.43 1320.20V1236.03H952.55V1320.20ZM952.55 1320.20V1177.11H953.67V1320.20ZM953.67 1320.20V1151.86H954.79V1320.20ZM954.79 1320.20V1252.86H955.91V1320.20ZM955.91 1320.20V1210.78H957.04V1320.20ZM957.04 1320.20V1261.28H958.16V1320.20ZM958.16 1320.20V1278.12H959.28V1320.20ZM959.28 1320.20V1294.95H960.40V1320.20ZM960.40 1320.20V1278.12H961.52V1320.20ZM961.52 1320.20V1219.20H962.64V1320.20ZM962.64 1320.20V1278.12H963.76V1320.20ZM963.76 1320.20V1303.37H964.88V1320.20ZM964.88 1320.20V1269.70H966.00V1320.20ZM966.00 1320.20V1278.12H967.12V1320.20ZM967.12 1320.20V1252.86H968.24V1320.20ZM968.24 1320.20V1278.12H971.61V1320.20ZM971.61 1320.20V1261.28H972.73V1320.20ZM972.73 1320.20V1269.70H974.97V1320.20ZM974.97 1320.20V1151.86H976.09V1320.20ZM976.09 1320.20V1269.70H977.21V1320.20ZM977.21 1320.20V1286.53H978.33V1320.20ZM978.33 1320.20V1294.95H979.45V1320.20ZM979.45 1320.20V1278.12H980.57V1320.20ZM980.57 1320.20V1294.95H981.69V1320.20ZM981.69 1320.20V1286.53H982.81V1320.20ZM982.81 1320.20V1269.70H983.94V1320.20ZM983.94 1320.20V1219.20H985.06V1320.20ZM985.06 1320.20V1286.53H986.18V1320.20ZM986.18 1320.20V1236.03H987.30V1320.20ZM987.30 1320.20V1269.70H988.42V1320.20ZM988.42 1320.20V1278.12H989.54V1320.20ZM989.54 1320.20V1286.53H990.66V1320.20ZM990.66 1320.20V1261.28H991.78V1320.20ZM991.78 1320.20V1269.70H992.90V1320.20ZM992.90 1320.20V1303.37H994.02V1320.20ZM994.02 1320.20V1269.70H995.14V1320.20ZM995.14 1320.20V1294.95H996.26V1320.20ZM996.26 1320.20V1278.12H997.39V1320.20ZM997.39 1320.20V1303.37H998.51V1320.20ZM998.51 1320.20V1278.12H999.63V1320.20ZM999.63 1320.20V1219.20H1000.75V1320.20ZM1000.75 1320.20V1261.28H1001.87V1320.20ZM1001.87 1320.20V1294.95H1002.99V1320.20ZM1002.99 1320.20V1269.70H1005.23V1320.20ZM1005.23 1320.20V1160.28H1006.35V1320.20ZM1006.35 1320.20V1219.20H1007.47V1320.20ZM1007.47 1320.20V1177.11H1008.59V1320.20ZM1008.59 1320.20V1236.03H1009.71V1320.20ZM1009.71 1320.20V1227.61H1010.84V1320.20ZM1010.84 1320.20V1252.86H1011.96V1320.20ZM1011.96 1320.20V1202.36H1013.08V1320.20ZM1013.08 1320.20V1168.69H1014.20V1320.20ZM1014.20 1320.20V1261.28H1015.32V1320.20ZM1015.32 1320.20V1286.53H1016.44V1320.20ZM1016.44 1320.20V1227.61H1017.56V1320.20ZM1017.56 1320.20V1236.03H1018.68V1320.20ZM1018.68 1320.20V1278.12H1019.80V1320.20ZM1019.80 1320.20V1294.95H1020.92V1320.20ZM1020.92 1320.20V1278.12H1022.04V1320.20ZM1022.04 1320.20V1227.61H1023.16V1320.20ZM1023.16 1320.20V1286.53H1024.29V1320.20ZM1024.29 1320.20V1252.86H1025.41V1320.20ZM1025.41 1320.20V1278.12H1028.77V1320.20ZM1028.77 1320.20V1303.37H1029.89V1320.20ZM1204.74 1320.20V1286.53H1213.71V1320.20ZM1213.71 1320.20V1278.12H1214.83V1320.20ZM1214.83 1320.20V1286.53H1215.95V1320.20ZM1215.95 1320.20V1227.61H1217.07V1320.20ZM1217.07 1320.20V1168.69H1218.19V1320.20ZM1218.19 1320.20V1084.52H1219.31V1320.20ZM1219.31 1320.20V1185.53H1220.43V1320.20ZM1220.43 1320.20V1034.02H1221.55V1320.20ZM1221.55 1320.20V916.18H1222.67V1320.20ZM1222.67 1320.20V1076.11H1223.79V1320.20ZM1223.79 1320.20V1185.53H1224.91V1320.20ZM1224.91 1320.20V1252.86H1226.04V1320.20ZM1226.04 1320.20V1135.03H1227.16V1320.20ZM1227.16 1320.20V966.69H1228.28V1320.20ZM1228.28 1320.20V1143.44H1229.40V1320.20ZM1229.40 1320.20V1261.28H1230.52V1320.20ZM1230.52 1320.20V1278.12H1231.64V1320.20ZM1231.64 1320.20V1244.45H1232.76V1320.20ZM1232.76 1320.20V1286.53H1233.88V1320.20ZM1233.88 1320.20V1278.12H1235.00V1320.20ZM1235.00 1320.20V1252.86H1236.12V1320.20ZM1236.12 1320.20V1244.45H1237.24V1320.20ZM1237.24 1320.20V1227.61H1238.36V1320.20ZM1238.36 1320.20V1160.28H1239.49V1320.20ZM1239.49 1320.20V1092.94H1240.61V1320.20ZM1240.61 1320.20V1227.61H1241.73V1320.20ZM1241.73 1320.20V1252.86H1242.85V1320.20ZM1242.85 1320.20V1143.44H1243.97V1320.20ZM1243.97 1320.20V1135.03H1245.09V1320.20ZM1245.09 1320.20V1244.45H1246.21V1320.20ZM1246.21 1320.20V1202.36H1247.33V1320.20ZM1247.33 1320.20V1236.03H1248.45V1320.20ZM1248.45 1320.20V1269.70H1249.57V1320.20ZM1249.57 1320.20V1252.86H1250.69V1320.20ZM1250.69 1320.20V1177.11H1251.81V1320.20ZM1251.81 1320.20V983.52H1252.94V1320.20ZM1252.94 1320.20V975.10H1254.06V1320.20ZM1254.06 1320.20V1210.78H1255.18V1320.20ZM1255.18 1320.20V1252.86H1256.30V1320.20ZM1256.30 1320.20V1168.69H1257.42V1320.20ZM1257.42 1320.20V1067.69H1258.54V1320.20ZM1258.54 1320.20V1177.11H1259.66V1320.20ZM1259.66 1320.20V1244.45H1260.78V1320.20ZM1260.78 1320.20V1143.44H1261.90V1320.20ZM1261.90 1320.20V1185.53H1263.02V1320.20ZM1263.02 1320.20V1160.28H1264.14V1320.20ZM1264.14 1320.20V1227.61H1265.26V1320.20ZM1265.26 1320.20V1252.86H1267.51V1320.20ZM1267.51 1320.20V1294.95H1268.63V1320.20ZM1268.63 1320.20V1278.12H1270.87V1320.20ZM1270.87 1320.20V1210.78H1271.99V1320.20ZM1271.99 1320.20V1168.69H1273.11V1320.20ZM1273.11 1320.20V1252.86H1274.23V1320.20ZM1274.23 1320.20V1278.12H1276.47V1320.20ZM1276.47 1320.20V1294.95H1277.59V1320.20ZM1277.59 1320.20V1278.12H1278.71V1320.20ZM1278.71 1320.20V1269.70H1279.84V1320.20ZM1279.84 1320.20V1244.45H1280.96V1320.20ZM1280.96 1320.20V1168.69H1282.08V1320.20ZM1282.08 1320.20V1261.28H1283.20V1320.20ZM1283.20 1320.20V1278.12H1286.56V1320.20ZM1286.56 1320.20V1294.95H1287.68V1320.20ZM1287.68 1320.20V1286.53H1289.92V1320.20ZM1289.92 1320.20V1278.12H1291.04V1320.20ZM1291.04 1320.20V1303.37H1294.41V1320.20ZM1294.41 1320.20V1278.12H1295.53V1320.20ZM1295.53 1320.20V1286.53H1296.65V1320.20ZM1296.65 1320.20V1294.95H1297.77V1320.20ZM1297.77 1320.20V1236.03H1298.89V1320.20ZM1298.89 1320.20V1193.95H1300.01V1320.20ZM1300.01 1320.20V941.44H1301.13V1320.20ZM1301.13 1320.20V1050.86H1302.25V1320.20ZM1302.25 1320.20V1177.11H1303.37V1320.20ZM1303.37 1320.20V1269.70H1304.49V1320.20ZM1304.49 1320.20V1278.12H1306.74V1320.20ZM1306.74 1320.20V1286.53H1307.86V1320.20ZM1307.86 1320.20V1278.12H1310.10V1320.20ZM1310.10 1320.20V1303.37H1311.22V1320.20ZM1311.22 1320.20V1294.95H1312.34V1320.20ZM1312.34 1320.20V1278.12H1314.58V1320.20ZM1314.58 1320.20V1294.95H1315.70V1320.20ZM1315.70 1320.20V1303.37H1319.06V1320.20ZM1319.06 1320.20V1278.12H1320.19V1320.20ZM1320.19 1320.20V1303.37H1322.43V1320.20ZM1322.43 1320.20V1278.12H1323.55V1320.20ZM1323.55 1320.20V1303.37H1324.67V1320.20ZM1324.67 1320.20V1278.12H1326.91V1320.20ZM1326.91 1320.20V1202.36H1328.03V1320.20ZM1328.03 1320.20V1252.86H1331.39V1320.20ZM1331.39 1320.20V1135.03H1332.51V1320.20ZM1332.51 1320.20V899.35H1333.64V1320.20ZM1333.64 1320.20V1101.36H1334.76V1320.20ZM1334.76 1320.20V1177.11H1335.88V1320.20ZM1335.88 1320.20V1244.45H1337.00V1320.20ZM1337.00 1320.20V1286.53H1338.12V1320.20ZM1338.12 1320.20V1269.70H1339.24V1320.20ZM1339.24 1320.20V1278.12H1342.60V1320.20ZM1342.60 1320.20V1210.78H1343.72V1320.20ZM1343.72 1320.20V1278.12H1344.84V1320.20ZM1344.84 1320.20V1261.28H1345.96V1320.20ZM1345.96 1320.20V1168.69H1347.09V1320.20ZM1347.09 1320.20V1261.28H1348.21V1320.20ZM1348.21 1320.20V1219.20H1349.33V1320.20ZM1349.33 1320.20V1269.70H1350.45V1320.20ZM1350.45 1320.20V1278.12H1352.69V1320.20ZM2173.14 1320.20V1294.95H2174.26V1320.20ZM2174.26 1320.20V1286.53H2175.38V1320.20ZM2175.38 1320.20V1294.95H2178.74V1320.20ZM2178.74 1320.20V1286.53H2179.86V1320.20ZM2179.86 1320.20V1294.95H2180.99V1320.20ZM2180.99 1320.20V1286.53H2182.11V1320.20ZM2182.11 1320.20V1303.37H2183.23V1320.20ZM2183.23 1320.20V1294.95H2184.35V1320.20ZM2184.35 1320.20V1303.37H2186.59V1320.20ZM2186.59 1320.20V1294.95H2187.71V1320.20ZM2187.71 1320.20V1278.12H2188.83V1320.20ZM2188.83 1320.20V1227.61H2189.95V1320.20ZM2189.95 1320.20V1151.86H2191.07V1320.20ZM2191.07 1320.20V1227.61H2192.19V1320.20ZM2192.19 1320.20V1236.03H2193.31V1320.20ZM2193.31 1320.20V1151.86H2194.44V1320.20ZM2194.44 1320.20V1269.70H2195.56V1320.20ZM2195.56 1320.20V1261.28H2196.68V1320.20ZM2196.68 1320.20V1286.53H2197.80V1320.20ZM2197.80 1320.20V1244.45H2198.92V1320.20ZM2198.92 1320.20V1286.53H2200.04V1320.20ZM2200.04 1320.20V1135.03H2201.16V1320.20ZM2201.16 1320.20V1151.86H2202.28V1320.20ZM2202.28 1320.20V1261.28H2203.40V1320.20ZM2203.40 1320.20V1286.53H2204.52V1320.20ZM2204.52 1320.20V1143.44H2205.64V1320.20ZM2205.64 1320.20V1168.69H2206.76V1320.20ZM2206.76 1320.20V1227.61H2207.89V1320.20ZM2207.89 1320.20V1278.12H2209.01V1320.20ZM2209.01 1320.20V1269.70H2210.13V1320.20ZM2210.13 1320.20V1286.53H2211.25V1320.20ZM2211.25 1320.20V1269.70H2212.37V1320.20ZM2212.37 1320.20V1210.78H2213.49V1320.20ZM2213.49 1320.20V1236.03H2214.61V1320.20ZM2214.61 1320.20V1286.53H2215.73V1320.20ZM2215.73 1320.20V1261.28H2216.85V1320.20ZM2216.85 1320.20V1286.53H2219.09V1320.20ZM2219.09 1320.20V1261.28H2220.21V1320.20ZM2220.21 1320.20V1278.12H2221.34V1320.20ZM2221.34 1320.20V1252.86H2222.46V1320.20ZM2222.46 1320.20V1261.28H2223.58V1320.20ZM2223.58 1320.20V1278.12H2224.70V1320.20ZM2224.70 1320.20V1269.70H2226.94V1320.20ZM2226.94 1320.20V1261.28H2228.06V1320.20ZM2228.06 1320.20V1286.53H2229.18V1320.20ZM2229.18 1320.20V1294.95H2230.30V1320.20ZM2230.30 1320.20V1261.28H2232.54V1320.20ZM2232.54 1320.20V1252.86H2233.66V1320.20ZM2233.66 1320.20V1286.53H2234.79V1320.20ZM2234.79 1320.20V1244.45H2235.91V1320.20ZM2235.91 1320.20V1227.61H2237.03V1320.20ZM2237.03 1320.20V1168.69H2238.15V1320.20ZM2238.15 1320.20V1202.36H2239.27V1320.20ZM2239.27 1320.20V1219.20H2240.39V1320.20ZM2240.39 1320.20V1261.28H2241.51V1320.20ZM2241.51 1320.20V1278.12H2242.63V1320.20ZM2242.63 1320.20V1261.28H2243.75V1320.20ZM2243.75 1320.20V1278.12H2245.99V1320.20ZM2245.99 1320.20V1261.28H2247.11V1320.20ZM2247.11 1320.20V1269.70H2248.24V1320.20ZM2248.24 1320.20V1278.12H2249.36V1320.20ZM2249.36 1320.20V1261.28H2250.48V1320.20ZM2250.48 1320.20V1269.70H2251.60V1320.20ZM2251.60 1320.20V1278.12H2252.72V1320.20ZM2252.72 1320.20V1244.45H2253.84V1320.20ZM2253.84 1320.20V1278.12H2254.96V1320.20ZM2254.96 1320.20V1252.86H2256.08V1320.20ZM2256.08 1320.20V1278.12H2257.20V1320.20ZM2257.20 1320.20V1294.95H2258.32V1320.20ZM2258.32 1320.20V1278.12H2259.44V1320.20ZM2259.44 1320.20V1294.95H2261.69V1320.20ZM2261.69 1320.20V1269.70H2262.81V1320.20ZM2262.81 1320.20V1303.37H2265.05V1320.20ZM2265.05 1320.20V1269.70H2266.17V1320.20ZM2266.17 1320.20V1303.37H2267.29V1320.20ZM2267.29 1320.20V1294.95H2268.41V1320.20ZM2268.41 1320.20V1278.12H2269.53V1320.20ZM2269.53 1320.20V1303.37H2270.65V1320.20ZM2270.65 1320.20V1278.12H2271.77V1320.20ZM2271.77 1320.20V1294.95H2272.89V1320.20ZM2272.89 1320.20V1303.37H2274.01V1320.20ZM2274.01 1320.20V1269.70H2275.14V1320.20ZM2275.14 1320.20V1303.37H2276.26V1320.20ZM2276.26 1320.20V1294.95H2277.38V1320.20ZM2277.38 1320.20V1278.12H2278.50V1320.20ZM2278.50 1320.20V1294.95H2279.62V1320.20ZM2279.62 1320.20V1278.12H2280.74V1320.20ZM2280.74 1320.20V1185.53H2281.86V1320.20ZM2281.86 1320.20V1286.53H2282.98V1320.20ZM2282.98 1320.20V1278.12H2284.10V1320.20ZM2284.10 1320.20V1303.37H2285.22V1320.20ZM2285.22 1320.20V1269.70H2286.34V1320.20ZM2286.34 1320.20V1303.37H2287.46V1320.20ZM2287.46 1320.20V1294.95H2288.59V1320.20ZM2288.59 1320.20V1286.53H2289.71V1320.20ZM2289.71 1320.20V1311.78H2290.83V1320.20ZM2290.83 1320.20V1269.70H2291.95V1320.20ZM2291.95 1320.20V1303.37H2293.07V1320.20ZM2293.07 1320.20V1252.86H2294.19V1320.20ZM2294.19 1320.20V1202.36H2295.31V1320.20ZM2295.31 1320.20V1219.20H2296.43V1320.20ZM2296.43 1320.20V1294.95H2297.55V1320.20ZM2297.55 1320.20V1278.12H2298.67V1320.20ZM2298.67 1320.20V1261.28H2299.79V1320.20ZM2299.79 1320.20V1303.37H2300.91V1320.20ZM2300.91 1320.20V1269.70H2302.04V1320.20ZM2302.04 1320.20V1303.37H2303.16V1320.20ZM2303.16 1320.20V1278.12H2304.28V1320.20ZM2304.28 1320.20V1294.95H2306.52V1320.20ZM2306.52 1320.20V1261.28H2307.64V1320.20ZM2307.64 1320.20V1244.45H2308.76V1320.20ZM2308.76 1320.20V1185.53H2309.88V1320.20ZM2309.88 1320.20V1294.95H2311.00V1320.20ZM2311.00 1320.20V1269.70H2312.12V1320.20ZM2312.12 1320.20V1303.37H2313.24V1320.20ZM2313.24 1320.20V1269.70H2314.36V1320.20ZM2314.36 1320.20V1303.37H2315.49V1320.20ZM2315.49 1320.20V1269.70H2316.61V1320.20ZM2316.61 1320.20V1303.37H2317.73V1320.20Z" fill="#229172"/>
<rect x="156.3" y="1320.70" width="2260.7" height="3" fill="#000" opacity="0.25" filter="url(#sh)"/>
<rect x="154.3" y="1320.20" width="2261.7" height="1.6" fill="#707070"/>
<rect x="154.3" y="815.20" width="2" height="506.00" fill="#555"/>
<rect x="155.45" y="1322.20" width="1.5" height="10" fill="#aaa"/>
<text x="117.95" y="1357" font-size="20.5" fill="#111" textLength="76.5" lengthAdjust="spacingAndGlyphs">mar. 07</text>
<rect x="478.25" y="1322.20" width="1.5" height="10" fill="#aaa"/>
<text x="441.25" y="1357" font-size="20.5" fill="#111" textLength="75.5" lengthAdjust="spacingAndGlyphs">mer. 08</text>
<rect x="801.05" y="1322.20" width="1.5" height="10" fill="#aaa"/>
<text x="765.80" y="1357" font-size="20.5" fill="#111" textLength="72" lengthAdjust="spacingAndGlyphs">jeu. 09</text>
<rect x="1123.85" y="1322.20" width="1.5" height="10" fill="#aaa"/>
<text x="1086.35" y="1357" font-size="20.5" fill="#111" textLength="76.5" lengthAdjust="spacingAndGlyphs">ven. 10</text>
<rect x="1446.65" y="1322.20" width="1.5" height="10" fill="#aaa"/>
<text x="1406.65" y="1357" font-size="20.5" fill="#111" textLength="81.5" lengthAdjust="spacingAndGlyphs">sam. 11</text>
<rect x="1769.45" y="1322.20" width="1.5" height="10" fill="#aaa"/>
<text x="1731.70" y="1357" font-size="20.5" fill="#111" textLength="77" lengthAdjust="spacingAndGlyphs">dim. 12</text>
<rect x="2092.25" y="1322.20" width="1.5" height="10" fill="#aaa"/>
<text x="2055.50" y="1357" font-size="20.5" fill="#111" textLength="75" lengthAdjust="spacingAndGlyphs">lun. 13</text>
<text x="121.40" y="1327.10" font-size="19" fill="#3a3a3a" stroke="#3a3a3a" stroke-width="0.15" textLength="11.8" lengthAdjust="spacingAndGlyphs">0</text>
<text x="109.20" y="1242.93" font-size="19" fill="#3a3a3a" stroke="#3a3a3a" stroke-width="0.15" textLength="24" lengthAdjust="spacingAndGlyphs">10</text>
<text x="109.20" y="1158.76" font-size="19" fill="#3a3a3a" stroke="#3a3a3a" stroke-width="0.15" textLength="24" lengthAdjust="spacingAndGlyphs">20</text>
<text x="109.20" y="1074.59" font-size="19" fill="#3a3a3a" stroke="#3a3a3a" stroke-width="0.15" textLength="24" lengthAdjust="spacingAndGlyphs">30</text>
<text x="109.20" y="990.42" font-size="19" fill="#3a3a3a" stroke="#3a3a3a" stroke-width="0.15" textLength="24" lengthAdjust="spacingAndGlyphs">40</text>
<text x="109.20" y="906.25" font-size="19" fill="#3a3a3a" stroke="#3a3a3a" stroke-width="0.15" textLength="24" lengthAdjust="spacingAndGlyphs">50</text>
<text x="109.20" y="822.08" font-size="19" fill="#3a3a3a" stroke="#3a3a3a" stroke-width="0.15" textLength="24" lengthAdjust="spacingAndGlyphs">60</text>
<text transform="translate(86.5,1067.5) rotate(-90)" font-size="21.5" fill="#333" stroke="#333" stroke-width="0.35" text-anchor="middle">kW</text>
<path d="M1990 68H2406V89.5A8 8 0 0 1 2398 97.5H1998A8 8 0 0 1 1990 89.5Z" fill="#fff"/>
<text x="2112" y="89.2" font-size="24.5" font-weight="bold" fill="#111" textLength="172" lengthAdjust="spacingAndGlyphs">LHB-site-L730</text>
<rect x="1992.00" y="107.90" width="412.30" height="58.00" rx="9" fill="#fff" stroke="#7b7b7b" stroke-width="3"/>
<text x="2052.30" y="148.00" font-size="27" fill="#111" textLength="311" lengthAdjust="spacingAndGlyphs" xml:space="preserve">Consommation: 116 kWh</text>
<rect x="1992.00" y="178.30" width="412.30" height="58.00" rx="9" fill="#fff" stroke="#7b7b7b" stroke-width="3"/>
<text x="2114.20" y="217.70" font-size="27" fill="#111" textLength="187.7" lengthAdjust="spacingAndGlyphs" xml:space="preserve">P Max :  22 kW</text>
<rect x="1992.00" y="248.20" width="412.30" height="58.00" rx="9" fill="#fff" stroke="#7b7b7b" stroke-width="3"/>
<text x="2128.70" y="288.00" font-size="27" fill="#111" textLength="158.6" lengthAdjust="spacingAndGlyphs" xml:space="preserve">P min : 1 kW</text>
<rect x="561.70" y="805.80" width="412.40" height="58.00" rx="9" fill="#fff" stroke="#7b7b7b" stroke-width="3"/>
<text x="622.40" y="845.90" font-size="27" fill="#111" textLength="310.6" lengthAdjust="spacingAndGlyphs" xml:space="preserve">Consommation: 672 kWh</text>
<rect x="1100.20" y="806.00" width="411.60" height="58.00" rx="9" fill="#fff" stroke="#7b7b7b" stroke-width="3"/>
<text x="1220.50" y="846.60" font-size="27" fill="#111" textLength="190.5" lengthAdjust="spacingAndGlyphs" xml:space="preserve">P Max :  58 kW</text>
<rect x="1610.40" y="806.00" width="411.90" height="58.00" rx="9" fill="#fff" stroke="#7b7b7b" stroke-width="3"/>
<text x="1745.50" y="846.60" font-size="27" fill="#111" textLength="160" lengthAdjust="spacingAndGlyphs" xml:space="preserve">P min : 0 kW</text>
<rect x="1047.3" y="542.4" width="522.3" height="69.6" rx="10" fill="#fff" fill-opacity="0.9"/>
<text x="1174.2" y="588.9" font-size="31" font-weight="bold" fill="#111" textLength="281" lengthAdjust="spacingAndGlyphs">lundi 13 avril 2026</text>
<rect x="176.5" y="49.2" width="481.5" height="77.5" fill="#0a0a18"/>
<clipPath id="ecotop"><rect x="180" y="40" width="200" height="56.6"/></clipPath>
<clipPath id="ecobot"><rect x="180" y="96.6" width="200" height="40"/></clipPath>
<g fill="none" stroke="#00f2ca" stroke-width="7.2" stroke-linecap="round" clip-path="url(#ecotop)"><path d="M194.9 93.8H210.6A9.15 11.9 0 1 0 208.3 102.5" /><path d="M198.4 74.4L204.6 70.6" stroke-width="5.8"/><path d="M235.8 87A8.6 11.9 0 1 0 235.8 102.2"/><ellipse cx="257.3" cy="94.6" rx="9.95" ry="11.9"/></g>
<g fill="none" stroke="#00c2a2" stroke-width="7.2" stroke-linecap="round" clip-path="url(#ecobot)"><path d="M194.9 93.8H210.6A9.15 11.9 0 1 0 208.3 102.5" /><path d="M198.4 74.4L204.6 70.6" stroke-width="5.8"/><path d="M235.8 87A8.6 11.9 0 1 0 235.8 102.2"/><ellipse cx="257.3" cy="94.6" rx="9.95" ry="11.9"/></g>
<g fill="none" stroke="#fff" stroke-width="6.8" stroke-linecap="round" stroke-linejoin="round"><path d="M275.2 86.3L282.7 106.8L291.1 84.2L299.1 106.8L314.6 67.8"/><path d="M316 84.5Q325.5 75 334.6 86.5V107.3"/><ellipse cx="325.2" cy="98.2" rx="8.4" ry="7.2"/><path d="M346.5 73.3V102.5Q346.5 107 352.8 107"/><path d="M361.6 73.3V102.5Q361.6 107 368.4 107"/><path d="M341.8 81.2H371.8"/></g>
<ellipse cx="433.8" cy="88.8" rx="26" ry="28" fill="#00b4e0"/>
<g fill="none" stroke="#f4fbfd" stroke-width="1.8" stroke-linecap="butt"><path d="M420 96.4V80.2H424.5A4.7 4.7 0 0 1 424.5 89.6H420"/><path d="M423.5 89.6L429.6 96.4"/><path d="M435.2 82.4V93.6Q435.2 96.2 438.4 96.2"/><path d="M419.5 89.6H450"/><path d="M450 89.3A5.6 6.8 0 1 0 448.4 94.1"/></g>
<text x="468.6" y="78.9" font-size="12.2" fill="#06a2d6" stroke="#06a2d6" stroke-width="0.25" textLength="48" lengthAdjust="spacingAndGlyphs">Le réseau</text>
<text x="468.6" y="92.1" font-size="12.2" fill="#06a2d6" stroke="#06a2d6" stroke-width="0.25" textLength="60.8" lengthAdjust="spacingAndGlyphs">de transport</text>
<text x="468.6" y="105.3" font-size="12.2" fill="#06a2d6" stroke="#06a2d6" stroke-width="0.25" textLength="57.5" lengthAdjust="spacingAndGlyphs">d’électricité</text>
<rect x="546.5" y="61.4" width="100.5" height="55.7" fill="#fff"/>
<rect x="553" y="68" width="8" height="7.5" fill="#2a3990"/><rect x="564.5" y="68" width="7.5" height="7.5" fill="#e1000f"/><path d="M560 68.5Q563.5 70 562.5 72.5L564 75.5H560Z" fill="#fff"/>
<text x="553" y="84" font-size="7" font-weight="bold" fill="#222">RÉPUBLIQUE</text>
<text x="553" y="92" font-size="7" font-weight="bold" fill="#222">FRANÇAISE</text>
<text x="553" y="99" font-size="3.5" fill="#555" font-style="italic">Liberté</text><text x="553" y="103" font-size="3.5" fill="#555" font-style="italic">Égalité</text><text x="553" y="107" font-size="3.5" fill="#555" font-style="italic">Fraternité</text>
<rect x="607.5" y="67" width="34" height="44.5" fill="#fff" stroke="#3a70c0" stroke-width="1.2"/>
<text x="612.5" y="74.8" font-size="5.6" font-weight="bold" fill="#e0201a" textLength="24" lengthAdjust="spacing">ADEME</text>
<circle cx="624.5" cy="87.5" r="7.6" fill="#2e5fb0"/><path d="M621 82Q624 84 622.5 87Q626 89 624 93M627 81.5Q629 84 628 86" fill="none" stroke="#9fb8e8" stroke-width="1.1"/>
<rect x="613" y="99.5" width="23" height="1.3" fill="#e87070"/><rect x="613" y="102.6" width="23" height="1.3" fill="#e87070"/><rect x="613" y="105.7" width="23" height="1.3" fill="#e87070"/>
<rect x="170.8" y="136.9" width="487.7" height="119.9" fill="none" stroke="#d9d9d9" stroke-width="3"/>
<rect x="172.5" y="138.4" width="116.4" height="50.6" fill="#f2f2f2"/>
<rect x="288.9" y="138.4" width="5.7" height="117" fill="#d9d9d9"/>
<rect x="294.6" y="138.4" width="116.6" height="50.6" fill="#f2f2f2"/>
<rect x="411.2" y="138.4" width="5.7" height="117" fill="#d9d9d9"/>
<rect x="416.9" y="138.4" width="116.5" height="50.6" fill="#f2f2f2"/>
<rect x="533.4" y="138.4" width="5.2" height="117" fill="#d9d9d9"/>
<rect x="538.6" y="138.4" width="117.0" height="50.6" fill="#f2f2f2"/>
<rect x="172.3" y="189" width="483.5" height="4.2" fill="#d9d9d9"/>
<rect x="169.3" y="253.4" width="490.7" height="4.9" fill="#d9d9d9"/><rect x="655.6" y="135.4" width="4.4" height="122.9" fill="#d9d9d9"/>
<svg x="180.2" y="195.2" width="105.9" height="54.6" viewBox="0 0 106 55" preserveAspectRatio="none"><rect width="106" height="55" fill="url(#tile)"/><path d="M16 0C35 18 60 26 80 24C92 23 100 20 106 16.5V0Z" fill="#00f0c8"/><path d="M29 0C45 9 62 12 78 11.5C90 11 100 6 106 3V0Z" fill="#00a58a"/></svg>
<svg x="301.9" y="196.2" width="106.1" height="55.3" viewBox="0 0 106 55" preserveAspectRatio="none"><rect width="106" height="55" fill="url(#tile)"/><path d="M16 0C35 18 60 26 80 24C92 23 100 20 106 16.5V0Z" fill="#00f0c8"/><path d="M29 0C45 9 62 12 78 11.5C90 11 100 6 106 3V0Z" fill="#00a58a"/></svg>
<svg x="424" y="196.2" width="106.3" height="55.3" viewBox="0 0 106 55" preserveAspectRatio="none"><rect width="106" height="55" fill="url(#tile)"/><path d="M16 0C35 18 60 26 80 24C92 23 100 20 106 16.5V0Z" fill="#00f0c8"/><path d="M29 0C45 9 62 12 78 11.5C90 11 100 6 106 3V0Z" fill="#00a58a"/></svg>
<svg x="544" y="196.2" width="105.9" height="55.3" viewBox="0 0 106 55" preserveAspectRatio="none"><rect width="106" height="55" fill="url(#tile)"/><path d="M16 0C35 18 60 26 80 24C92 23 100 20 106 16.5V0Z" fill="#00f0c8"/><path d="M29 0C45 9 62 12 78 11.5C90 11 100 6 106 3V0Z" fill="#00a58a"/></svg>
<text x="231" y="174.9" font-size="33.5" fill="#111" stroke="#111" stroke-width="0.4" text-anchor="middle">J</text>
<text x="320.6" y="174.9" font-size="33.5" fill="#111" stroke="#111" stroke-width="0.4" text-anchor="middle">J</text>
<path d="M345.7 164.1H360.1M352.9 155.2V173" stroke="#111" stroke-width="1.6" fill="none"/>
<text x="385.2" y="174.9" font-size="33.5" fill="#111" stroke="#111" stroke-width="0.1" text-anchor="middle">1</text>
<text x="442.8" y="174.9" font-size="33.5" fill="#111" stroke="#111" stroke-width="0.4" text-anchor="middle">J</text>
<path d="M467.9 164.1H482.3M475.1 155.2V173" stroke="#111" stroke-width="1.6" fill="none"/>
<text x="507.4" y="174.9" font-size="33.5" fill="#111" stroke="#111" font-weight="bold" text-anchor="middle">2</text>
<text x="564.8" y="174.9" font-size="33.5" fill="#111" stroke="#111" stroke-width="0.4" text-anchor="middle">J</text>
<path d="M589.9 164.1H604.3M597.1 155.2V173" stroke="#111" stroke-width="1.6" fill="none"/>
<text x="629.4" y="174.9" font-size="33.5" fill="#111" stroke="#111" stroke-width="0.9" text-anchor="middle">3</text>
<path d="M2322.3 1322H2436.6V1372A9 9 0 0 1 2427.6 1381H2322.3Z" fill="#fff"/>
<g fill="none" stroke="#0a70b8" stroke-width="4.8" stroke-linecap="round"><path d="M2361.4 1344.3A12.9 12.9 0 1 0 2361.7 1351.1"/><path d="M2349 1351.1H2361.7"/></g>
<path d="M2370.3 1350.6A6.9 6.9 0 1 1 2381.2 1352.2L2370.5 1361H2385.3" fill="none" stroke="#0a70b8" stroke-width="4.8" stroke-linecap="round" stroke-linejoin="miter"/>
<path d="M2392 1324.8L2383.7 1338.4L2392.9 1340.6L2389.4 1362.5L2399.9 1338.8L2391.6 1335.8Z" fill="#ec5a24"/>
<path d="M2403.4 1338.8H2424.4L2418.7 1345H2400.8Z M2399 1348H2417.9L2412.6 1353.9H2396.8Z M2395.1 1357H2416.5L2410.9 1363.4H2392.9Z" fill="#f29020"/>
<text x="2392.9" y="1334.7" font-size="7.4" font-weight="bold" fill="#ee6a38" textLength="31" lengthAdjust="spacingAndGlyphs">FRANCE</text>
<text x="2339.5" y="1368.2" font-size="3.6" fill="#3a8ad0" textLength="74.4" lengthAdjust="spacingAndGlyphs">Optimisation des ressources énergétiques</text>
</svg></body></html>
